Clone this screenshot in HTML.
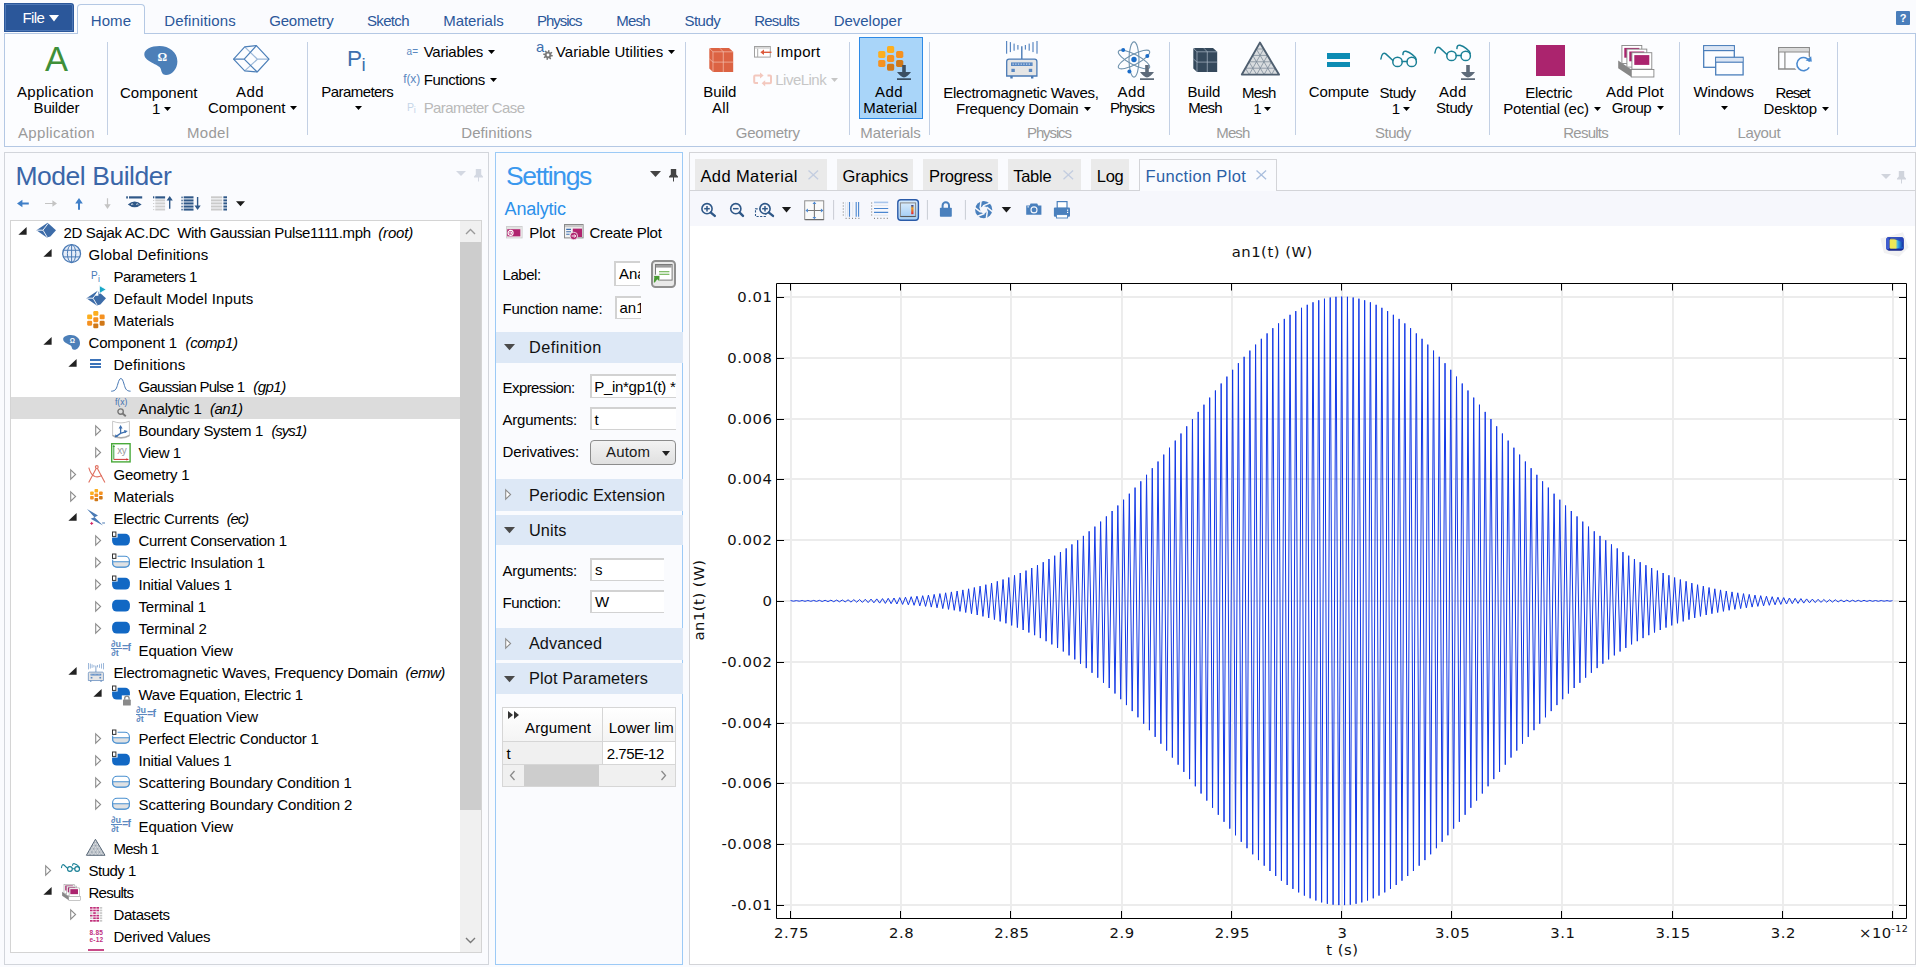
<!DOCTYPE html>
<html lang="en"><head><meta charset="utf-8"><title>COMSOL Multiphysics - Function Plot</title>
<style>
html,body{margin:0;padding:0;}
body{width:1916px;height:967px;overflow:hidden;background:#fafbfe;position:relative;font-family:"Liberation Sans",sans-serif;}
.a{position:absolute;box-sizing:border-box;}
.t{position:absolute;white-space:pre;line-height:1;color:#000;}
svg{overflow:visible;}
</style></head><body>
<div class="a" style="left:4px;top:3px;width:70px;height:29px;background:#2b579a;border-radius:0 3px 0 0;"></div>
<div class="a" style="left:5px;top:4px;width:68px;height:27px;border:1px solid #4d77b6;border-radius:0 2px 0 0;"></div>
<span class="t" style="top:10.00px;font-size:15px;color:#fff;left:22.50px;letter-spacing:-0.624px;">File</span>
<svg class="a" style="left:48.5px;top:14.7px;" width="10" height="6.4" viewBox="0 0 10 6.4"><path d="M0 0H10L5 6.4Z" fill="#fff"/></svg>
<div class="a" style="left:4px;top:33px;width:1912px;height:114px;background:#fcfdff;border:1px solid #b4c8e4;"></div>
<div class="a" style="left:77px;top:4px;width:68px;height:30px;background:#fcfdff;border:1px solid #b4c8e4;border-radius:4px 4px 0 0;border-bottom:none;"></div>
<span class="t" style="top:13.00px;font-size:15px;color:#2b579a;left:90.80px;letter-spacing:0.061px;">Home</span>
<span class="t" style="top:13.00px;font-size:15px;color:#2b579a;left:164.30px;letter-spacing:0.145px;">Definitions</span>
<span class="t" style="top:13.00px;font-size:15px;color:#2b579a;left:269.20px;letter-spacing:-0.194px;">Geometry</span>
<span class="t" style="top:13.00px;font-size:15px;color:#2b579a;left:367.00px;letter-spacing:-0.672px;">Sketch</span>
<span class="t" style="top:13.00px;font-size:15px;color:#2b579a;left:443.20px;letter-spacing:-0.045px;">Materials</span>
<span class="t" style="top:13.00px;font-size:15px;color:#2b579a;left:537.00px;letter-spacing:-1.031px;">Physics</span>
<span class="t" style="top:13.00px;font-size:15px;color:#2b579a;left:616.20px;letter-spacing:-0.729px;">Mesh</span>
<span class="t" style="top:13.00px;font-size:15px;color:#2b579a;left:684.40px;letter-spacing:-0.490px;">Study</span>
<span class="t" style="top:13.00px;font-size:15px;color:#2b579a;left:754.20px;letter-spacing:-0.755px;">Results</span>
<span class="t" style="top:13.00px;font-size:15px;color:#2b579a;left:833.70px;letter-spacing:-0.022px;">Developer</span>
<div class="a" style="left:1896px;top:11px;width:14px;height:14px;background:#4a7ebb;border-radius:1px;"></div>
<span class="t" style="top:13.00px;font-size:11px;color:#fff;font-weight:bold;left:1903.00px;transform:translateX(-50%);">?</span>
<div class="a" style="left:106.5px;top:42px;width:1px;height:93px;background:#c3d0e4;"></div>
<div class="a" style="left:306.5px;top:42px;width:1px;height:93px;background:#c3d0e4;"></div>
<div class="a" style="left:685.0px;top:42px;width:1px;height:93px;background:#c3d0e4;"></div>
<div class="a" style="left:848.5px;top:42px;width:1px;height:93px;background:#c3d0e4;"></div>
<div class="a" style="left:929.0px;top:42px;width:1px;height:93px;background:#c3d0e4;"></div>
<div class="a" style="left:1169.0px;top:42px;width:1px;height:93px;background:#c3d0e4;"></div>
<div class="a" style="left:1294.5px;top:42px;width:1px;height:93px;background:#c3d0e4;"></div>
<div class="a" style="left:1488.5px;top:42px;width:1px;height:93px;background:#c3d0e4;"></div>
<div class="a" style="left:1678.5px;top:42px;width:1px;height:93px;background:#c3d0e4;"></div>
<div class="a" style="left:1837.0px;top:42px;width:1px;height:93px;background:#c3d0e4;"></div>
<span class="t" style="top:125.00px;font-size:15px;color:#9a9a9a;left:18.00px;letter-spacing:0.331px;">Application</span>
<span class="t" style="top:125.00px;font-size:15px;color:#9a9a9a;left:187.00px;letter-spacing:0.285px;">Model</span>
<span class="t" style="top:125.00px;font-size:15px;color:#9a9a9a;left:461.30px;letter-spacing:0.065px;">Definitions</span>
<span class="t" style="top:125.00px;font-size:15px;color:#9a9a9a;left:735.80px;letter-spacing:-0.237px;">Geometry</span>
<span class="t" style="top:125.00px;font-size:15px;color:#9a9a9a;left:860.30px;letter-spacing:-0.045px;">Materials</span>
<span class="t" style="top:125.00px;font-size:15px;color:#9a9a9a;left:1027.00px;letter-spacing:-1.115px;">Physics</span>
<span class="t" style="top:125.00px;font-size:15px;color:#9a9a9a;left:1216.30px;letter-spacing:-0.896px;">Mesh</span>
<span class="t" style="top:125.00px;font-size:15px;color:#9a9a9a;left:1375.00px;letter-spacing:-0.515px;">Study</span>
<span class="t" style="top:125.00px;font-size:15px;color:#9a9a9a;left:1563.30px;letter-spacing:-0.772px;">Results</span>
<span class="t" style="top:125.00px;font-size:15px;color:#9a9a9a;left:1737.60px;letter-spacing:-0.389px;">Layout</span>
<div class="a" style="left:858.5px;top:37px;width:64.5px;height:81.5px;background:#a9d5f9;border:1px solid #2e8ae6;"></div>
<span class="t" style="top:84.00px;font-size:15px;left:17.00px;letter-spacing:0.311px;">Application</span>
<span class="t" style="top:100.00px;font-size:15px;left:33.50px;letter-spacing:-0.117px;">Builder</span>
<span class="t" style="top:85.00px;font-size:15px;left:120.00px;letter-spacing:-0.008px;">Component</span>
<span class="t" style="top:101.00px;font-size:15px;left:152.00px;letter-spacing:-1.344px;">1</span>
<span class="t" style="top:84.00px;font-size:15px;left:236.00px;letter-spacing:0.398px;">Add</span>
<span class="t" style="top:100.00px;font-size:15px;left:208.00px;letter-spacing:-0.008px;">Component</span>
<span class="t" style="top:84.00px;font-size:15px;left:321.30px;letter-spacing:-0.570px;">Parameters</span>
<span class="t" style="top:44.00px;font-size:15px;left:423.70px;letter-spacing:-0.228px;">Variables</span>
<span class="t" style="top:72.00px;font-size:15px;left:423.70px;letter-spacing:-0.431px;">Functions</span>
<span class="t" style="top:44.00px;font-size:15px;left:555.80px;letter-spacing:0.062px;">Variable Utilities</span>
<span class="t" style="top:84.00px;font-size:15px;left:703.30px;letter-spacing:-0.090px;">Build</span>
<span class="t" style="top:100.00px;font-size:15px;left:712.00px;letter-spacing:0.164px;">All</span>
<span class="t" style="top:44.00px;font-size:15px;left:776.30px;letter-spacing:0.297px;">Import</span>
<span class="t" style="top:84.00px;font-size:15px;left:875.00px;letter-spacing:0.398px;">Add</span>
<span class="t" style="top:100.00px;font-size:15px;left:863.30px;letter-spacing:0.049px;">Material</span>
<span class="t" style="top:85.00px;font-size:15px;left:943.30px;letter-spacing:-0.261px;">Electromagnetic Waves,</span>
<span class="t" style="top:101.00px;font-size:15px;left:956.00px;letter-spacing:-0.269px;">Frequency Domain</span>
<span class="t" style="top:84.00px;font-size:15px;left:1117.50px;letter-spacing:0.398px;">Add</span>
<span class="t" style="top:100.00px;font-size:15px;left:1110.00px;letter-spacing:-1.115px;">Physics</span>
<span class="t" style="top:84.00px;font-size:15px;left:1187.50px;letter-spacing:-0.140px;">Build</span>
<span class="t" style="top:100.00px;font-size:15px;left:1188.30px;letter-spacing:-0.829px;">Mesh</span>
<span class="t" style="top:85.00px;font-size:15px;left:1242.00px;letter-spacing:-0.796px;">Mesh</span>
<span class="t" style="top:101.00px;font-size:15px;left:1253.30px;letter-spacing:-1.344px;">1</span>
<span class="t" style="top:84.00px;font-size:15px;left:1308.70px;letter-spacing:-0.096px;">Compute</span>
<span class="t" style="top:85.00px;font-size:15px;left:1379.50px;letter-spacing:-0.465px;">Study</span>
<span class="t" style="top:101.00px;font-size:15px;left:1391.70px;letter-spacing:-1.344px;">1</span>
<span class="t" style="top:84.00px;font-size:15px;left:1439.00px;letter-spacing:0.298px;">Add</span>
<span class="t" style="top:100.00px;font-size:15px;left:1436.00px;letter-spacing:-0.390px;">Study</span>
<span class="t" style="top:85.00px;font-size:15px;left:1525.30px;letter-spacing:-0.284px;">Electric</span>
<span class="t" style="top:101.00px;font-size:15px;left:1503.30px;letter-spacing:-0.206px;">Potential (ec)</span>
<span class="t" style="top:84.00px;font-size:15px;left:1606.00px;letter-spacing:0.140px;">Add Plot</span>
<span class="t" style="top:100.00px;font-size:15px;left:1611.70px;letter-spacing:-0.426px;">Group</span>
<span class="t" style="top:84.00px;font-size:15px;left:1693.40px;letter-spacing:-0.060px;">Windows</span>
<span class="t" style="top:85.00px;font-size:15px;left:1775.60px;letter-spacing:-0.997px;">Reset</span>
<span class="t" style="top:101.00px;font-size:15px;left:1763.60px;letter-spacing:-0.272px;">Desktop</span>
<span class="t" style="top:100.00px;font-size:15px;color:#b9b9b9;left:423.70px;letter-spacing:-0.609px;">Parameter Case</span>
<span class="t" style="top:72.00px;font-size:15px;color:#c6c6c6;left:775.30px;letter-spacing:-0.521px;">LiveLink</span>
<svg class="a" style="left:163.5px;top:107.0px;" width="7" height="4" viewBox="0 0 7 4"><path d="M0 0H7L3.5 4Z" fill="#000"/></svg>
<svg class="a" style="left:289.5px;top:106.0px;" width="7" height="4" viewBox="0 0 7 4"><path d="M0 0H7L3.5 4Z" fill="#000"/></svg>
<svg class="a" style="left:354.8px;top:105.9px;" width="7" height="4" viewBox="0 0 7 4"><path d="M0 0H7L3.5 4Z" fill="#000"/></svg>
<svg class="a" style="left:487.5px;top:50.0px;" width="7" height="4" viewBox="0 0 7 4"><path d="M0 0H7L3.5 4Z" fill="#000"/></svg>
<svg class="a" style="left:489.5px;top:78.0px;" width="7" height="4" viewBox="0 0 7 4"><path d="M0 0H7L3.5 4Z" fill="#000"/></svg>
<svg class="a" style="left:668.0px;top:50.0px;" width="7" height="4" viewBox="0 0 7 4"><path d="M0 0H7L3.5 4Z" fill="#000"/></svg>
<svg class="a" style="left:830.8px;top:78.0px;" width="7" height="4" viewBox="0 0 7 4"><path d="M0 0H7L3.5 4Z" fill="#c6c6c6"/></svg>
<svg class="a" style="left:1083.7px;top:107.0px;" width="7" height="4" viewBox="0 0 7 4"><path d="M0 0H7L3.5 4Z" fill="#000"/></svg>
<svg class="a" style="left:1264.0px;top:107.0px;" width="7" height="4" viewBox="0 0 7 4"><path d="M0 0H7L3.5 4Z" fill="#000"/></svg>
<svg class="a" style="left:1402.5px;top:107.0px;" width="7" height="4" viewBox="0 0 7 4"><path d="M0 0H7L3.5 4Z" fill="#000"/></svg>
<svg class="a" style="left:1593.7px;top:107.0px;" width="7" height="4" viewBox="0 0 7 4"><path d="M0 0H7L3.5 4Z" fill="#000"/></svg>
<svg class="a" style="left:1656.5px;top:106.0px;" width="7" height="4" viewBox="0 0 7 4"><path d="M0 0H7L3.5 4Z" fill="#000"/></svg>
<svg class="a" style="left:1721.0px;top:106.0px;" width="7" height="4" viewBox="0 0 7 4"><path d="M0 0H7L3.5 4Z" fill="#000"/></svg>
<svg class="a" style="left:1822.0px;top:107.0px;" width="7" height="4" viewBox="0 0 7 4"><path d="M0 0H7L3.5 4Z" fill="#000"/></svg>
<span class="t" style="top:42.00px;font-size:34.5px;color:#3f8f38;left:56.60px;transform:translateX(-50%);">A</span>
<svg class="a" style="left:143.8px;top:45.6px" width="33.4" height="29.0" viewBox="0 0 33.4 29"><path d="M0.3 8.2C0.3 3.5 7 0 15.5 0C25 0 33.4 6 33.4 15.5C33.4 23 28 29 22 29C18.5 29 17.5 26 17 23.5C16.3 20.5 13 19.5 9.5 17.5C4.5 14.8 0.3 12.5 0.3 8.2Z" fill="#4c7fb8"/></svg>
<span class="t" style="top:51.00px;font-size:12px;color:#fff;font-weight:bold;font-family:'Liberation Serif',serif;left:162.30px;transform:translateX(-50%);">Ω</span>
<svg class="a" style="left:233px;top:44.6px;" width="36.6" height="27.6" viewBox="0 0 36.6 27.6"><g fill="none" stroke="#4c7fb8" stroke-width="1.2" stroke-linejoin="round"><path d="M0.6 14.2L11.7 1.9L23.4 0.6L36 14.2L24.2 27L11.7 25.9Z"/><path d="M0.6 14.2H11.2L23.4 0.6M11.2 14.2L24.2 27"/><path d="M36 14.2H24.4L11.7 1.9M24.4 14.2L11.7 25.9" stroke-opacity="0.55"/></g></svg>
<span class="t" style="top:48.00px;font-size:22.5px;color:#3d6fae;left:347.00px;">P</span>
<span class="t" style="top:55.00px;font-size:19px;color:#3d6fae;left:361.40px;">i</span>
<span class="t" style="top:47.00px;font-size:10px;color:#5b88c0;left:406.60px;letter-spacing:-0.006px;">a=</span>
<span class="t" style="top:73.00px;font-size:12px;color:#5b88c0;left:403.20px;letter-spacing:-0.109px;">f(x)</span>
<span class="t" style="top:102.00px;font-size:10.5px;color:#c5d5e8;left:407.00px;">P</span>
<span class="t" style="top:106.00px;font-size:9px;color:#c5d5e8;left:413.80px;">i</span>
<span class="t" style="top:39.00px;font-size:15px;color:#3d6fae;left:536.00px;">a</span>
<svg class="a" style="left:542.9px;top:50.4px;" width="10" height="10" viewBox="0 0 10 10"><path d="M9.89 5.32L9.64 6.57L7.96 6.46L7.48 7.17L8.23 8.69L7.17 9.39L6.06 8.13L5.22 8.29L4.68 9.89L3.43 9.64L3.54 7.96L2.83 7.48L1.31 8.23L0.61 7.17L1.87 6.06L1.71 5.22L0.11 4.68L0.36 3.43L2.04 3.54L2.52 2.83L1.77 1.31L2.83 0.61L3.94 1.87L4.78 1.71L5.32 0.11L6.57 0.36L6.46 2.04L7.17 2.52L8.69 1.77L9.39 2.83L8.13 3.94L8.29 4.78Z" fill="#777"/><circle cx="5" cy="5" r="1.4" fill="#fff"/></svg>
<svg class="a" style="left:708.8px;top:48.1px;" width="24.2" height="24" viewBox="0 0 24.2 24"><path d="M0.3 0.6L2.3 0H20L24.2 3.8V24H4L0.3 20.4Z" fill="#dc6343"/><path d="M4 3.8H24.2M4 3.8V24M4 3.8L0.6 0.5M14.3 3.8V24M4 14.1H24.2M14.3 3.8L11 0.3M0.3 10.8L4 14.1" stroke="#f4c0b0" stroke-width="0.7" fill="none"/></svg>
<svg class="a" style="left:754.4px;top:45.6px;" width="18" height="11.6" viewBox="0 0 18 11.6"><rect x="0.5" y="0.5" width="15.8" height="10.6" fill="#fff" stroke="#a0a0a0"/><rect x="1" y="1" width="14.8" height="1.8" fill="#d8d8d8"/><path d="M3.7 2.8V11" stroke="#a0a0a0" stroke-width="0.9"/><path d="M17.5 6.3H9" stroke="#dc5a3c" stroke-width="1.4"/><path d="M6.3 6.3L10 3.6V9Z" fill="#dc5a3c"/></svg>
<svg class="a" style="left:753px;top:73px;" width="19.5" height="13.5" viewBox="0 0 19.5 13.5"><g fill="none" stroke="#f3c8be" stroke-width="2"><path d="M8 2.5H2.2Q1.2 2.5 1.2 3.5V9Q1.2 10 2.2 10H5"/><path d="M11 10.2H17Q18 10.2 18 9.2V3.6Q18 2.6 17 2.6H14.5"/></g><path d="M7 -0.6L10.6 2.5L7 5.6Z" fill="#f3c8be"/><path d="M12.2 7.2L8.6 10.2L12.2 13.4Z" fill="#f3c8be"/></svg>
<svg class="a" style="left:878px;top:46.1px" width="25.5" height="24.8" viewBox="0 0 25.5 24.8"><rect x="9" y="0" width="7.2" height="6.9" rx="1.6" fill="#fcae1e"/><rect x="0.2" y="5" width="7.2" height="6.9" rx="1.6" fill="#fcae1e"/><rect x="18.1" y="5" width="7.2" height="6.9" rx="1.6" fill="#f59120"/><rect x="9" y="9" width="7.2" height="6.9" rx="1.6" fill="#f59120"/><rect x="0.2" y="14" width="7.2" height="6.9" rx="1.6" fill="#f59120"/><rect x="18.1" y="14" width="7.2" height="6.9" rx="1.6" fill="#d07818"/><rect x="9" y="17.8" width="7.2" height="6.9" rx="1.6" fill="#d07818"/></svg>
<svg class="a" style="left:895.6px;top:64px;" width="17" height="17" viewBox="0 0 17 17"><path d="M0 0H17V17H0Z" fill="none"/></svg>
<svg class="a" style="left:897px;top:65.1px;" width="14" height="15" viewBox="0 0 14 15"><path d="M5.2 0H8.8V7H14C12 10 9 12 7 12.6C5 12 2 10 0 7H5.2ZM0 13.3H14V15H0Z" fill="#3b4f62"/></svg>
<svg class="a" style="left:1006.2px;top:40.9px" width="32.0" height="37.5" viewBox="0 0 32 37.5"><rect x="0.0" y="0" width="1.2" height="12.7" fill="#5a88c2"/><rect x="3.8000000000000003" y="1.1" width="1.2" height="10" fill="#5a88c2"/><rect x="7.5" y="2.6" width="1.2" height="7.1" fill="#5a88c2"/><rect x="11.3" y="4" width="1.2" height="4.6" fill="#5a88c2"/><rect x="18.799999999999997" y="4" width="1.2" height="4.6" fill="#5a88c2"/><rect x="22.599999999999998" y="2.6" width="1.2" height="7.1" fill="#5a88c2"/><rect x="26.4" y="1.1" width="1.2" height="10" fill="#5a88c2"/><rect x="30.4" y="0" width="1.2" height="12.7" fill="#5a88c2"/><path d="M15.8 5.3V18" stroke="#4a7ab5" stroke-width="1.4"/><path d="M5.5 35V37.4M26.2 35V37.4" stroke="#4a7ab5" stroke-width="2.4"/><path d="M0.7 35V20.5Q0.7 18.2 3 18.2H28.6Q30.9 18.2 30.9 20.5V35Z" fill="#e6e6e6" stroke="#4a7ab5" stroke-width="1.3"/><rect x="5" y="21.4" width="21.6" height="3.6" fill="#5a88c2"/><path d="M6.5 23.2H25.5" stroke="#c8d8ee" stroke-width="1.2" stroke-dasharray="1.3 1.4"/><rect x="5.4" y="27.8" width="3.4" height="3.2" fill="#5a88c2"/><rect x="22.8" y="27.8" width="3.4" height="3.2" fill="#5a88c2"/></svg>
<svg class="a" style="left:1115.5px;top:40.6px;" width="36" height="37" viewBox="0 0 36 37"><g fill="none" stroke="#6f92ad" stroke-width="1.1"><ellipse cx="18" cy="18.5" rx="5" ry="17.6"/><ellipse cx="18" cy="18.5" rx="5" ry="17.6" transform="rotate(62 18 18.5)"/><ellipse cx="18" cy="18.5" rx="5" ry="17.6" transform="rotate(-62 18 18.5)"/></g><g fill="#1a6cc8"><circle cx="18" cy="18.5" r="2.7"/><circle cx="7.2" cy="8.9" r="2"/><circle cx="31.3" cy="14.9" r="2"/><circle cx="13.4" cy="30.4" r="2"/></g></svg>
<svg class="a" style="left:1140px;top:65.1px;" width="14" height="15" viewBox="0 0 14 15"><path d="M5.2 0H8.8V7H14C12 10 9 12 7 12.6C5 12 2 10 0 7H5.2ZM0 13.3H14V15H0Z" fill="#5e6b7a"/></svg>
<svg class="a" style="left:1193px;top:48.1px;" width="24.2" height="24" viewBox="0 0 24.2 24"><path d="M0.3 0.6L2.3 0H20L24.2 3.8V24H4L0.3 20.4Z" fill="#35495c"/><path d="M4 3.8H24.2M4 3.8V24M4 3.8L0.6 0.5M14.3 3.8V24M4 14.1H24.2M14.3 3.8L11 0.3M0.3 10.8L4 14.1" stroke="#aab8c6" stroke-width="0.7" fill="none"/></svg>
<svg class="a" style="left:1241.4px;top:42px" width="38.8" height="33.4" viewBox="0 0 38.8 33.4"><path d="M18.9 0.6L38 32.6H0.8Z" fill="#d9dcdf"/><path d="M15.3 7.0H22.7M8.2 32.6L22.7 7.0M8.2 32.6L4.4 26.2M11.7 13.4H26.5M15.7 32.6L26.5 13.4M15.7 32.6L8.0 19.8M8.0 19.8H30.4M23.1 32.6L30.4 19.8M23.1 32.6L11.7 13.4M4.4 26.2H34.2M30.6 32.6L34.2 26.2M30.6 32.6L15.3 7.0" stroke="#7d8b99" stroke-width="0.8" fill="none"/><path d="M18.9 0.6L38 32.6H0.8Z" fill="none" stroke="#4f5f70" stroke-width="1.9" stroke-linejoin="round"/></svg>
<div class="a" style="left:1327.2px;top:53.3px;width:22.8px;height:5.3px;background:#0d8cb4;"></div>
<div class="a" style="left:1327.2px;top:61.9px;width:22.8px;height:5.2px;background:#0d8cb4;"></div>
<svg class="a" style="left:1379.6px;top:49.8px" width="37.5" height="17.5" viewBox="0 0 37.5 17.5"><g fill="none" stroke="#1a8096" stroke-width="1.5" stroke-linecap="round"><circle cx="17.5" cy="11.9" r="4.7"/><circle cx="31.7" cy="11.9" r="4.7"/><path d="M22.2 11.4H27"/><path d="M12.9 10.5L5.8 3.9C4 2.3 1.6 3.5 0.9 9"/><path d="M36.2 9.5C35.5 6 30 2.5 26 1.3C24 0.8 23 2 22.9 4.6"/></g></svg>
<svg class="a" style="left:1434.4px;top:43.5px" width="37.5" height="17.5" viewBox="0 0 37.5 17.5"><g fill="none" stroke="#1a8096" stroke-width="1.5" stroke-linecap="round"><circle cx="17.5" cy="11.9" r="4.7"/><circle cx="31.7" cy="11.9" r="4.7"/><path d="M22.2 11.4H27"/><path d="M12.9 10.5L5.8 3.9C4 2.3 1.6 3.5 0.9 9"/><path d="M36.2 9.5C35.5 6 30 2.5 26 1.3C24 0.8 23 2 22.9 4.6"/></g></svg>
<svg class="a" style="left:1461px;top:64.9px;" width="14" height="15" viewBox="0 0 14 15"><path d="M5.2 0H8.8V7H14C12 10 9 12 7 12.6C5 12 2 10 0 7H5.2ZM0 13.3H14V15H0Z" fill="#5e6b7a"/></svg>
<div class="a" style="left:1535.8px;top:45px;width:29.7px;height:30.5px;background:#ab246e;"></div>
<svg class="a" style="left:1618px;top:44.6px" width="36.4" height="32.5" viewBox="0 0 36.4 32.5"><path d="M0.2 15.4L13.3 24.5V32H13.3L0.2 23.2Z" fill="#878787"/><rect x="3.9" y="0.5" width="19.9" height="18" fill="#fff" stroke="#878787" stroke-width="0.9"/><rect x="6.3" y="2.9" width="15" height="9.8" fill="#ab246e"/><rect x="8.9" y="4.1" width="19.9" height="18" fill="#fff" stroke="#878787" stroke-width="0.9"/><rect x="11.3" y="6.5" width="15" height="9.8" fill="#ab246e"/><rect x="13.9" y="7.7" width="19.9" height="16.5" fill="#fff" stroke="#878787" stroke-width="0.9"/><rect x="16.3" y="10.1" width="15" height="9.8" fill="#ab246e"/><rect x="13.3" y="24.5" width="22.6" height="7.5" fill="#fff" stroke="#878787" stroke-width="0.9"/></svg>
<svg class="a" style="left:1702.6px;top:44.6px;" width="41" height="31" viewBox="0 0 41 31"><rect x="0.7" y="0.7" width="30.6" height="21.6" fill="#fcfdff" stroke="#4a7ebb" stroke-width="1.3"/><rect x="1.3" y="1.3" width="29.4" height="4" fill="#dce6f4"/><path d="M0.7 5.6H31.3" stroke="#4a7ebb" stroke-width="1.2"/><rect x="12.7" y="12.3" width="27.4" height="17.6" fill="#fcfdff" stroke="#4a7ebb" stroke-width="1.3"/><rect x="13.3" y="12.9" width="26.2" height="4" fill="#dce6f4"/><path d="M12.7 17.2H40" stroke="#4a7ebb" stroke-width="1.2"/></svg>
<svg class="a" style="left:1778px;top:47px;" width="35" height="27" viewBox="0 0 35 27"><path d="M0.7 0.7H31.3V22H0.7Z" fill="#fcfdff" stroke="#8a8a8a" stroke-width="1.3"/><rect x="1.3" y="1.3" width="29.4" height="3.6" fill="#d8d8d8"/><path d="M0.7 5H31.3M6.9 5V22" stroke="#8a8a8a" stroke-width="1.2"/><circle cx="25.3" cy="17" r="9.2" fill="#fcfdff"/><path d="M31.6 14.6A6.6 6.6 0 1 0 31.2 20.4" fill="none" stroke="#4a8ad0" stroke-width="1.6"/><path d="M27.6 13.4L33.8 14.8L33.2 9.2Z" fill="#4a8ad0"/></svg>
<div class="a" style="left:4px;top:152px;width:485px;height:813px;border:1px solid #d2d5db;"></div>
<span class="t" style="top:163.00px;font-size:26.5px;color:#3a66a8;left:15.40px;letter-spacing:-0.461px;">Model Builder</span>
<svg class="a" style="left:14px;top:194px" width="234" height="20" viewBox="14 194 234 20"><path d="M17 203.5L22.4 199.8V202.5H28.8V204.5H22.4V207.2Z" fill="#3f7fc8"/><path d="M57 203.5L52.4 200.3V202.9H45V204.1H52.4V206.7Z" fill="#c4c4c4"/><path d="M79 198L82.8 203.6H80V209.8H78V203.6H75.2Z" fill="#3f7fc8"/><path d="M107.5 209L104.3 204.2H106.9V198.2H108.1V204.2H110.7Z" fill="#c4c4c4"/><rect x="126.2" y="196.3" width="1.7" height="2.2" fill="#2f5888"/><rect x="129" y="196.3" width="13.2" height="2.2" fill="#2f5888"/><path d="M127.8 204.4Q134.6 198.6 141.6 204.4Q134.6 210 127.8 204.4Z" fill="#2f5888"/><path d="M131 204.6Q132 203.2 133.2 204.4M136.2 204.4Q137.4 203.2 138.4 204.6" stroke="#fff" stroke-width="0.9" fill="none"/><rect x="153" y="196.3" width="1.3" height="2" fill="#2f5888"/><rect x="155.3" y="196.3" width="9.8" height="2.2" fill="#2f5888"/><rect x="153.2" y="200.0" width="1" height="1" fill="#c4c4c4"/><rect x="155.3" y="199.4" width="9.8" height="2" fill="#cfcfcf"/><rect x="153.2" y="203.0" width="1" height="1" fill="#c4c4c4"/><rect x="155.3" y="202.4" width="9.8" height="2" fill="#cfcfcf"/><rect x="153.2" y="206.1" width="1" height="1" fill="#c4c4c4"/><rect x="155.3" y="205.5" width="9.8" height="2" fill="#cfcfcf"/><rect x="153.2" y="209.1" width="1" height="1" fill="#c4c4c4"/><rect x="155.3" y="208.5" width="9.8" height="2" fill="#cfcfcf"/><path d="M169.7 196L172.8 200.6H170.4V208.8H169V200.6H166.6Z" fill="#2f5888"/><rect x="181.4" y="196.6" width="1.3" height="1.6" fill="#2f5888"/><rect x="183.7" y="196.3" width="9.8" height="2.1" fill="#2f5888"/><rect x="181.4" y="199.7" width="1.3" height="1.6" fill="#2f5888"/><rect x="183.7" y="199.4" width="9.8" height="2.1" fill="#2f5888"/><rect x="181.4" y="202.7" width="1.3" height="1.6" fill="#2f5888"/><rect x="183.7" y="202.4" width="9.8" height="2.1" fill="#2f5888"/><rect x="181.4" y="205.8" width="1.3" height="1.6" fill="#2f5888"/><rect x="183.7" y="205.5" width="9.8" height="2.1" fill="#2f5888"/><rect x="181.4" y="208.8" width="1.3" height="1.6" fill="#2f5888"/><rect x="183.7" y="208.5" width="9.8" height="2.1" fill="#2f5888"/><path d="M197.6 210L194.5 205.4H196.9V197H198.3V205.4H200.7Z" fill="#2f5888"/><rect x="211" y="196.3" width="11.2" height="2" fill="#cacaca"/><rect x="223.4" y="196.3" width="3.6" height="2" fill="#2f5888"/><rect x="211" y="199.4" width="11.2" height="2" fill="#cacaca"/><rect x="223.4" y="199.4" width="3.6" height="2" fill="#2f5888"/><rect x="211" y="202.4" width="11.2" height="2" fill="#cacaca"/><rect x="223.4" y="202.4" width="3.6" height="2" fill="#2f5888"/><rect x="211" y="205.5" width="11.2" height="2" fill="#cacaca"/><rect x="223.4" y="205.5" width="3.6" height="2" fill="#2f5888"/><rect x="211" y="208.5" width="11.2" height="2" fill="#cacaca"/><rect x="223.4" y="208.5" width="3.6" height="2" fill="#2f5888"/><path d="M236 201.3H245L240.5 206.3Z" fill="#1a1a1a"/></svg>
<svg class="a" style="left:456px;top:170.8px;" width="10" height="5" viewBox="0 0 10 5"><path d="M0 0H10L5 5Z" fill="#d3d8e2"/></svg>
<svg class="a" style="left:473.8px;top:168.5px;" width="9" height="12.5" viewBox="0 0 9 12.5"><path d="M1.8 0H7.2V5.6L9 7.6V8.6H5V12.5H4V8.6H0V7.6L1.8 5.6Z" fill="#d3d8e2"/></svg>
<div class="a" style="left:10px;top:220px;width:472px;height:733px;background:#fff;border:1px solid #d4d4d4;"></div>
<div class="a" style="left:460px;top:221px;width:21px;height:731px;background:#f0f0f0;"></div>
<div class="a" style="left:460px;top:242px;width:21px;height:568px;background:#cdcdcd;"></div>
<svg class="a" style="left:465px;top:228px;" width="11" height="7" viewBox="0 0 11 7"><path d="M1 6L5.5 1.5L10 6" fill="none" stroke="#9a9a9a" stroke-width="1.4"/></svg>
<svg class="a" style="left:465px;top:937px;" width="11" height="7" viewBox="0 0 11 7"><path d="M1 1L5.5 5.5L10 1" fill="none" stroke="#7a7a7a" stroke-width="1.4"/></svg>
<div class="a" style="left:11px;top:397px;width:449px;height:22px;background:#dcdcdc;"></div>
<svg class="a" style="left:17.9px;top:227.1px;" width="9" height="8" viewBox="0 0 9 8"><path d="M8.6 0V7.8H0.4Z" fill="#222"/></svg>
<svg class="a" style="left:36.2px;top:222.4px;" width="20.4" height="17" viewBox="0 0 20.4 17"><path d="M0.4 8.2L11.6 0.7L20 8.2L14.4 14.6L10.8 15.5Z" fill="#3d6ca8"/><path d="M12.2 1.4L7 8.2L11.1 15M7 8.2H0.9" stroke="#fff" stroke-width="0.9" fill="none"/></svg>
<span class="t" style="top:225.00px;font-size:15px;left:63.50px;letter-spacing:-0.338px;">2D Sajak AC.DC  With Gaussian Pulse1111.mph</span>
<span class="t" style="top:225.00px;font-size:15px;font-style:italic;left:378.30px;letter-spacing:-0.189px;">(root)</span>
<svg class="a" style="left:42.9px;top:249.1px;" width="9" height="8" viewBox="0 0 9 8"><path d="M8.6 0V7.8H0.4Z" fill="#222"/></svg>
<svg class="a" style="left:62.199999999999996px;top:244.2px;" width="19.2" height="19.2" viewBox="0 0 19.2 19.2"><circle cx="9.6" cy="9.6" r="8.9" fill="#e6edf8" stroke="#4a7ab5" stroke-width="1.3"/><g fill="none" stroke="#4a7ab5" stroke-width="1"><ellipse cx="9.6" cy="9.6" rx="4.2" ry="8.9"/><path d="M9.6 0.7V18.5M1 6.3H18.2M1 12.9H18.2"/></g></svg>
<span class="t" style="top:247.00px;font-size:15px;left:88.50px;letter-spacing:0.132px;">Global Definitions</span>
<span class="t" style="top:271.00px;font-size:10px;color:#4a7ab8;left:91.10px;">P</span>
<span class="t" style="top:275.00px;font-size:8.5px;color:#4a7ab8;left:98.10px;">i</span>
<span class="t" style="top:269.00px;font-size:15px;left:113.50px;letter-spacing:-0.568px;">Parameters 1</span>
<svg class="a" style="left:86.2px;top:289.4px;" width="20.4" height="17" viewBox="0 0 20.4 17"><path d="M0.4 9.2L11.6 1.7L20 9.2L14.4 15.6L10.8 16.5Z" fill="#3d6ca8"/><path d="M12.2 2.4L7 9.2L11.1 16M7 9.2H0.9" stroke="#fff" stroke-width="0.9" fill="none"/><path d="M12.4 0.6V5.6L12.4 6.8L9 6.8Z" fill="#fff"/><path d="M13.4 -3.4L20.2 0.4L13.4 4.6Z" fill="#1aa8c8" stroke="#fff" stroke-width="0.8"/></svg>
<span class="t" style="top:291.00px;font-size:15px;left:113.50px;letter-spacing:0.112px;">Default Model Inputs</span>
<svg class="a" style="left:87.10000000000001px;top:311.3px" width="17.8" height="17.4" viewBox="0 0 25.5 24.8"><rect x="9" y="0" width="7.2" height="6.9" rx="1.6" fill="#fcae1e"/><rect x="0.2" y="5" width="7.2" height="6.9" rx="1.6" fill="#fcae1e"/><rect x="18.1" y="5" width="7.2" height="6.9" rx="1.6" fill="#f59120"/><rect x="9" y="9" width="7.2" height="6.9" rx="1.6" fill="#f59120"/><rect x="0.2" y="14" width="7.2" height="6.9" rx="1.6" fill="#f59120"/><rect x="18.1" y="14" width="7.2" height="6.9" rx="1.6" fill="#d07818"/><rect x="9" y="17.8" width="7.2" height="6.9" rx="1.6" fill="#d07818"/></svg>
<span class="t" style="top:313.00px;font-size:15px;left:113.50px;letter-spacing:-0.032px;">Materials</span>
<svg class="a" style="left:42.9px;top:337.1px;" width="9" height="8" viewBox="0 0 9 8"><path d="M8.6 0V7.8H0.4Z" fill="#222"/></svg>
<svg class="a" style="left:62.9px;top:334.8px" width="17.0" height="14.8" viewBox="0 0 33.4 29"><path d="M0.3 8.2C0.3 3.5 7 0 15.5 0C25 0 33.4 6 33.4 15.5C33.4 23 28 29 22 29C18.5 29 17.5 26 17 23.5C16.3 20.5 13 19.5 9.5 17.5C4.5 14.8 0.3 12.5 0.3 8.2Z" fill="#4c7fb8"/></svg>
<span class="t" style="top:338.00px;font-size:6.5px;color:#fff;font-weight:bold;left:72.40px;transform:translateX(-50%);">Ω</span>
<span class="t" style="top:335.00px;font-size:15px;left:88.50px;letter-spacing:-0.156px;">Component 1</span>
<span class="t" style="top:335.00px;font-size:15px;font-style:italic;left:185.60px;letter-spacing:-0.453px;">(comp1)</span>
<svg class="a" style="left:67.9px;top:359.1px;" width="9" height="8" viewBox="0 0 9 8"><path d="M8.6 0V7.8H0.4Z" fill="#222"/></svg>
<div class="a" style="left:89.5px;top:358.8px;width:11.5px;height:2.1px;background:#3b73b9;"></div>
<div class="a" style="left:89.5px;top:362.55px;width:11.5px;height:2.1px;background:#3b73b9;"></div>
<div class="a" style="left:89.5px;top:366.3px;width:11.5px;height:2.1px;background:#3b73b9;"></div>
<span class="t" style="top:357.00px;font-size:15px;left:113.50px;letter-spacing:0.175px;">Definitions</span>
<svg class="a" style="left:111.3px;top:378px;" width="20" height="14" viewBox="0 0 20 14"><path d="M0.2 13.2C5 13.2 5.6 10 6.8 6C7.8 2.6 8.6 0.5 9.9 0.5C11.2 0.5 12 2.6 13 6C14.2 10 14.8 13.2 19.6 13.2" fill="none" stroke="#4a7ab5" stroke-width="1"/></svg>
<span class="t" style="top:379.00px;font-size:15px;left:138.50px;letter-spacing:-0.732px;">Gaussian Pulse 1</span>
<span class="t" style="top:379.00px;font-size:15px;font-style:italic;left:253.20px;letter-spacing:-0.508px;">(gp1)</span>
<span class="t" style="top:398.00px;font-size:8.5px;color:#3d6fae;left:114.90px;letter-spacing:0.073px;">f(x)</span>
<svg class="a" style="left:116.6px;top:408.4px;" width="10" height="10" viewBox="0 0 10 10"><circle cx="3.6" cy="3.6" r="2.7" fill="none" stroke="#777" stroke-width="1.4"/><path d="M5.6 5.6L8.8 8.3" stroke="#777" stroke-width="1.9"/></svg>
<span class="t" style="top:401.00px;font-size:15px;left:138.50px;letter-spacing:-0.183px;">Analytic 1</span>
<span class="t" style="top:401.00px;font-size:15px;font-style:italic;left:210.00px;letter-spacing:-0.533px;">(an1)</span>
<svg class="a" style="left:94.5px;top:424.5px;" width="7" height="11" viewBox="0 0 7 11"><path d="M0.7 0.8L5.6 5.5L0.7 10.2Z" fill="#fff" stroke="#8c8c8c" stroke-width="1.1"/></svg>
<svg class="a" style="left:112.0px;top:420.2px;" width="18" height="20" viewBox="0 0 18 20"><path d="M0.6 1.2Q9 4.6 17.4 1.2V16Q9 20.6 0.6 16Z" fill="#fff" stroke="#c8c8c8" stroke-width="1"/><path d="M0.6 15.4Q9 20 17.4 15.4" fill="none" stroke="#aaa" stroke-width="1.2"/><g stroke="#3d6fae" stroke-width="1.3" fill="none"><path d="M8.6 13.4V7.6M8.6 13.4L14 11.6M8.6 13.4L4.2 16.4"/></g><path d="M8.6 5L10.6 8.4H6.6ZM15.8 11L12.8 13.2L12 10ZM2.6 17.4L3.6 14.2L6 16.8Z" fill="#3d6fae"/></svg>
<span class="t" style="top:423.00px;font-size:15px;left:138.50px;letter-spacing:-0.382px;">Boundary System 1</span>
<span class="t" style="top:423.00px;font-size:15px;font-style:italic;left:271.40px;letter-spacing:-1.049px;">(sys1)</span>
<svg class="a" style="left:94.5px;top:446.5px;" width="7" height="11" viewBox="0 0 7 11"><path d="M0.7 0.8L5.6 5.5L0.7 10.2Z" fill="#fff" stroke="#8c8c8c" stroke-width="1.1"/></svg>
<svg class="a" style="left:111.1px;top:443.1px;" width="19.8" height="19.6" viewBox="0 0 19.8 19.6"><rect x="0.7" y="0.7" width="18.4" height="18.2" fill="#fff" stroke="#4aaa3a" stroke-width="1.4"/><path d="M2.8 16.4V3.4" stroke="#3aa03a" stroke-width="1"/><path d="M2.8 1.6L4 4H1.6Z" fill="#3aa03a"/><path d="M2.8 16.4H16" stroke="#d03030" stroke-width="1"/><path d="M18 16.4L15.4 17.6V15.2Z" fill="#d03030"/></svg>
<span class="t" style="top:446.00px;font-size:10px;color:#9a9a9a;left:117.20px;letter-spacing:-0.500px;">xy</span>
<span class="t" style="top:445.00px;font-size:15px;left:138.50px;letter-spacing:-0.413px;">View 1</span>
<svg class="a" style="left:69.5px;top:468.5px;" width="7" height="11" viewBox="0 0 7 11"><path d="M0.7 0.8L5.6 5.5L0.7 10.2Z" fill="#fff" stroke="#8c8c8c" stroke-width="1.1"/></svg>
<svg class="a" style="left:87.60000000000001px;top:465.3px;" width="17.6" height="18" viewBox="0 0 17.6 18"><g fill="none" stroke="#e07060" stroke-width="1.1"><circle cx="8.8" cy="2" r="1.4"/><path d="M8.3 3.3L0.7 17.6M9.3 3.3L16.9 17.6"/><path d="M0.8 2.6C2 7 4 10.6 7 11.6C9.6 12.4 12 11.6 13.9 10.6"/></g></svg>
<span class="t" style="top:467.00px;font-size:15px;left:113.50px;letter-spacing:-0.264px;">Geometry 1</span>
<svg class="a" style="left:69.5px;top:490.5px;" width="7" height="11" viewBox="0 0 7 11"><path d="M0.7 0.8L5.6 5.5L0.7 10.2Z" fill="#fff" stroke="#8c8c8c" stroke-width="1.1"/></svg>
<svg class="a" style="left:89.5px;top:489px" width="12.8" height="12.4" viewBox="0 0 25.5 24.8"><rect x="9" y="0" width="7.2" height="6.9" rx="1.6" fill="#fcae1e"/><rect x="0.2" y="5" width="7.2" height="6.9" rx="1.6" fill="#fcae1e"/><rect x="18.1" y="5" width="7.2" height="6.9" rx="1.6" fill="#f59120"/><rect x="9" y="9" width="7.2" height="6.9" rx="1.6" fill="#f59120"/><rect x="0.2" y="14" width="7.2" height="6.9" rx="1.6" fill="#f59120"/><rect x="18.1" y="14" width="7.2" height="6.9" rx="1.6" fill="#d07818"/><rect x="9" y="17.8" width="7.2" height="6.9" rx="1.6" fill="#d07818"/></svg>
<span class="t" style="top:489.00px;font-size:15px;left:113.50px;letter-spacing:-0.032px;">Materials</span>
<svg class="a" style="left:67.9px;top:513.1px;" width="9" height="8" viewBox="0 0 9 8"><path d="M8.6 0V7.8H0.4Z" fill="#222"/></svg>
<svg class="a" style="left:86.6px;top:509px;" width="18.4" height="17" viewBox="0 0 18.4 17"><path d="M0 0L11 6.6L7.6 8.2L16 16.4L3.6 9.8L7.4 8.2Z" fill="#4a7ab5"/><path d="M3.2 14.4H6.2M4.7 12.9V15.9" stroke="#d02060" stroke-width="1"/><path d="M15.2 14H18" stroke="#4a7ab5" stroke-width="1"/></svg>
<span class="t" style="top:511.00px;font-size:15px;left:113.50px;letter-spacing:-0.329px;">Electric Currents</span>
<span class="t" style="top:511.00px;font-size:15px;font-style:italic;left:226.70px;letter-spacing:-1.181px;">(ec)</span>
<svg class="a" style="left:94.5px;top:534.5px;" width="7" height="11" viewBox="0 0 7 11"><path d="M0.7 0.8L5.6 5.5L0.7 10.2Z" fill="#fff" stroke="#8c8c8c" stroke-width="1.1"/></svg>
<svg class="a" style="left:112.2px;top:531.1px;" width="20" height="21" viewBox="0 0 20 21"><rect x="0.1" y="2.8" width="17.8" height="11.8" rx="4.6" fill="#1268c4"/><rect x="-1.2" y="-0.7" width="6.8" height="7.2" fill="#fff"/><rect x="0.5" y="1.0" width="3.4" height="4.4" fill="#fff" stroke="#333" stroke-width="1"/></svg>
<span class="t" style="top:533.00px;font-size:15px;left:138.50px;letter-spacing:-0.313px;">Current Conservation 1</span>
<svg class="a" style="left:94.5px;top:556.5px;" width="7" height="11" viewBox="0 0 7 11"><path d="M0.7 0.8L5.6 5.5L0.7 10.2Z" fill="#fff" stroke="#8c8c8c" stroke-width="1.1"/></svg>
<svg class="a" style="left:112.2px;top:553.1px;" width="20" height="18" viewBox="0 0 20 18"><rect x="0.6" y="3.3" width="16.8" height="10.8" rx="4.4" fill="#fff" stroke="#4a90d0" stroke-width="1.1"/><path d="M0.7 8.7H17.3V9.7Q17.3 14 13 14H5Q0.7 14 0.7 9.7Z" fill="#dfe1e3" stroke="#4a90d0" stroke-width="1.1"/><rect x="-1.2" y="-0.7" width="6.8" height="7.2" fill="#fff"/><rect x="0.5" y="1.0" width="3.4" height="4.4" fill="#fff" stroke="#333" stroke-width="1"/></svg>
<span class="t" style="top:555.00px;font-size:15px;left:138.50px;letter-spacing:-0.179px;">Electric Insulation 1</span>
<svg class="a" style="left:94.5px;top:578.5px;" width="7" height="11" viewBox="0 0 7 11"><path d="M0.7 0.8L5.6 5.5L0.7 10.2Z" fill="#fff" stroke="#8c8c8c" stroke-width="1.1"/></svg>
<svg class="a" style="left:112.2px;top:575.1px;" width="20" height="21" viewBox="0 0 20 21"><rect x="0.1" y="2.8" width="17.8" height="11.8" rx="4.6" fill="#1268c4"/><rect x="-1.2" y="-0.7" width="6.8" height="7.2" fill="#fff"/><rect x="0.5" y="1.0" width="3.4" height="4.4" fill="#fff" stroke="#333" stroke-width="1"/></svg>
<span class="t" style="top:577.00px;font-size:15px;left:138.50px;letter-spacing:-0.197px;">Initial Values 1</span>
<svg class="a" style="left:94.5px;top:600.5px;" width="7" height="11" viewBox="0 0 7 11"><path d="M0.7 0.8L5.6 5.5L0.7 10.2Z" fill="#fff" stroke="#8c8c8c" stroke-width="1.1"/></svg>
<svg class="a" style="left:112.1px;top:597.1px;" width="20" height="21" viewBox="0 0 20 21"><rect x="0.1" y="2.8" width="17.8" height="11.8" rx="4.6" fill="#1268c4"/></svg>
<span class="t" style="top:599.00px;font-size:15px;left:138.50px;letter-spacing:-0.178px;">Terminal 1</span>
<svg class="a" style="left:94.5px;top:622.5px;" width="7" height="11" viewBox="0 0 7 11"><path d="M0.7 0.8L5.6 5.5L0.7 10.2Z" fill="#fff" stroke="#8c8c8c" stroke-width="1.1"/></svg>
<svg class="a" style="left:112.1px;top:619.1px;" width="20" height="21" viewBox="0 0 20 21"><rect x="0.1" y="2.8" width="17.8" height="11.8" rx="4.6" fill="#1268c4"/></svg>
<span class="t" style="top:621.00px;font-size:15px;left:138.50px;letter-spacing:-0.089px;">Terminal 2</span>
<span class="t" style="top:640.00px;font-size:9px;color:#5b88c0;font-weight:bold;left:111.10px;">∂u</span>
<div class="a" style="left:111.10000000000001px;top:648.0999999999999px;width:10.8px;height:1.1px;background:#5b88c0;"></div>
<span class="t" style="top:649.00px;font-size:9px;color:#5b88c0;font-weight:bold;left:111.30px;">∂t</span>
<span class="t" style="top:642.00px;font-size:10.5px;color:#5b88c0;font-weight:bold;left:121.90px;letter-spacing:-0.5px;">=f</span>
<span class="t" style="top:643.00px;font-size:15px;left:138.50px;letter-spacing:-0.102px;">Equation View</span>
<svg class="a" style="left:67.9px;top:667.1px;" width="9" height="8" viewBox="0 0 9 8"><path d="M8.6 0V7.8H0.4Z" fill="#222"/></svg>
<svg class="a" style="left:87.7px;top:663px" width="16.0" height="18.8" viewBox="0 0 32 37.5"><rect x="0.0" y="0" width="1.2" height="12.7" fill="#5a88c2"/><rect x="3.8000000000000003" y="1.1" width="1.2" height="10" fill="#5a88c2"/><rect x="7.5" y="2.6" width="1.2" height="7.1" fill="#5a88c2"/><rect x="11.3" y="4" width="1.2" height="4.6" fill="#5a88c2"/><rect x="18.799999999999997" y="4" width="1.2" height="4.6" fill="#5a88c2"/><rect x="22.599999999999998" y="2.6" width="1.2" height="7.1" fill="#5a88c2"/><rect x="26.4" y="1.1" width="1.2" height="10" fill="#5a88c2"/><rect x="30.4" y="0" width="1.2" height="12.7" fill="#5a88c2"/><path d="M15.8 5.3V18" stroke="#4a7ab5" stroke-width="1.4"/><path d="M5.5 35V37.4M26.2 35V37.4" stroke="#4a7ab5" stroke-width="2.4"/><path d="M0.7 35V20.5Q0.7 18.2 3 18.2H28.6Q30.9 18.2 30.9 20.5V35Z" fill="#e6e6e6" stroke="#4a7ab5" stroke-width="1.3"/><rect x="5" y="21.4" width="21.6" height="3.6" fill="#5a88c2"/><path d="M6.5 23.2H25.5" stroke="#c8d8ee" stroke-width="1.2" stroke-dasharray="1.3 1.4"/><rect x="5.4" y="27.8" width="3.4" height="3.2" fill="#5a88c2"/><rect x="22.8" y="27.8" width="3.4" height="3.2" fill="#5a88c2"/></svg>
<span class="t" style="top:665.00px;font-size:15px;left:113.50px;letter-spacing:-0.204px;">Electromagnetic Waves, Frequency Domain</span>
<span class="t" style="top:665.00px;font-size:15px;font-style:italic;left:405.60px;letter-spacing:-0.493px;">(emw)</span>
<svg class="a" style="left:92.9px;top:689.1px;" width="9" height="8" viewBox="0 0 9 8"><path d="M8.6 0V7.8H0.4Z" fill="#222"/></svg>
<svg class="a" style="left:112.2px;top:685.1px;" width="20" height="21" viewBox="0 0 20 21"><rect x="0.1" y="2.8" width="17.8" height="11.8" rx="4.6" fill="#1268c4"/><rect x="-1.2" y="-0.7" width="6.8" height="7.2" fill="#fff"/><rect x="0.5" y="1.0" width="3.4" height="4.4" fill="#fff" stroke="#333" stroke-width="1"/><rect x="9.8" y="10.4" width="9.4" height="9.2" fill="#fff"/><rect x="11" y="14.6" width="7.8" height="6" rx="0.6" fill="#8a8a8a"/><path d="M12.7 14.8V13.4A2.2 2.2 0 0 1 17.1 13.4V14.8" fill="none" stroke="#8a8a8a" stroke-width="1.3"/></svg>
<span class="t" style="top:687.00px;font-size:15px;left:138.50px;letter-spacing:-0.271px;">Wave Equation, Electric 1</span>
<span class="t" style="top:706.00px;font-size:9px;color:#5b88c0;font-weight:bold;left:136.10px;">∂u</span>
<div class="a" style="left:136.1px;top:714.0999999999999px;width:10.8px;height:1.1px;background:#5b88c0;"></div>
<span class="t" style="top:715.00px;font-size:9px;color:#5b88c0;font-weight:bold;left:136.30px;">∂t</span>
<span class="t" style="top:708.00px;font-size:10.5px;color:#5b88c0;font-weight:bold;left:146.90px;letter-spacing:-0.5px;">=f</span>
<span class="t" style="top:709.00px;font-size:15px;left:163.50px;letter-spacing:-0.094px;">Equation View</span>
<svg class="a" style="left:94.5px;top:732.5px;" width="7" height="11" viewBox="0 0 7 11"><path d="M0.7 0.8L5.6 5.5L0.7 10.2Z" fill="#fff" stroke="#8c8c8c" stroke-width="1.1"/></svg>
<svg class="a" style="left:112.2px;top:729.1px;" width="20" height="18" viewBox="0 0 20 18"><rect x="0.6" y="3.3" width="16.8" height="10.8" rx="4.4" fill="#fff" stroke="#4a90d0" stroke-width="1.1"/><path d="M0.7 8.7H17.3V9.7Q17.3 14 13 14H5Q0.7 14 0.7 9.7Z" fill="#dfe1e3" stroke="#4a90d0" stroke-width="1.1"/><rect x="-1.2" y="-0.7" width="6.8" height="7.2" fill="#fff"/><rect x="0.5" y="1.0" width="3.4" height="4.4" fill="#fff" stroke="#333" stroke-width="1"/></svg>
<span class="t" style="top:731.00px;font-size:15px;left:138.50px;letter-spacing:-0.235px;">Perfect Electric Conductor 1</span>
<svg class="a" style="left:94.5px;top:754.5px;" width="7" height="11" viewBox="0 0 7 11"><path d="M0.7 0.8L5.6 5.5L0.7 10.2Z" fill="#fff" stroke="#8c8c8c" stroke-width="1.1"/></svg>
<svg class="a" style="left:112.2px;top:751.1px;" width="20" height="21" viewBox="0 0 20 21"><rect x="0.1" y="2.8" width="17.8" height="11.8" rx="4.6" fill="#1268c4"/><rect x="-1.2" y="-0.7" width="6.8" height="7.2" fill="#fff"/><rect x="0.5" y="1.0" width="3.4" height="4.4" fill="#fff" stroke="#333" stroke-width="1"/></svg>
<span class="t" style="top:753.00px;font-size:15px;left:138.50px;letter-spacing:-0.224px;">Initial Values 1</span>
<svg class="a" style="left:94.5px;top:776.5px;" width="7" height="11" viewBox="0 0 7 11"><path d="M0.7 0.8L5.6 5.5L0.7 10.2Z" fill="#fff" stroke="#8c8c8c" stroke-width="1.1"/></svg>
<svg class="a" style="left:112.2px;top:773.1px;" width="20" height="18" viewBox="0 0 20 18"><rect x="0.6" y="3.3" width="16.8" height="10.8" rx="4.4" fill="#fff" stroke="#4a90d0" stroke-width="1.1"/><path d="M0.7 8.7H17.3V9.7Q17.3 14 13 14H5Q0.7 14 0.7 9.7Z" fill="#dfe1e3" stroke="#4a90d0" stroke-width="1.1"/></svg>
<span class="t" style="top:775.00px;font-size:15px;left:138.50px;letter-spacing:-0.086px;">Scattering Boundary Condition 1</span>
<svg class="a" style="left:94.5px;top:798.5px;" width="7" height="11" viewBox="0 0 7 11"><path d="M0.7 0.8L5.6 5.5L0.7 10.2Z" fill="#fff" stroke="#8c8c8c" stroke-width="1.1"/></svg>
<svg class="a" style="left:112.2px;top:795.1px;" width="20" height="18" viewBox="0 0 20 18"><rect x="0.6" y="3.3" width="16.8" height="10.8" rx="4.4" fill="#fff" stroke="#4a90d0" stroke-width="1.1"/><path d="M0.7 8.7H17.3V9.7Q17.3 14 13 14H5Q0.7 14 0.7 9.7Z" fill="#dfe1e3" stroke="#4a90d0" stroke-width="1.1"/></svg>
<span class="t" style="top:797.00px;font-size:15px;left:138.50px;letter-spacing:-0.069px;">Scattering Boundary Condition 2</span>
<span class="t" style="top:816.00px;font-size:9px;color:#5b88c0;font-weight:bold;left:111.10px;">∂u</span>
<div class="a" style="left:111.10000000000001px;top:824.0999999999999px;width:10.8px;height:1.1px;background:#5b88c0;"></div>
<span class="t" style="top:825.00px;font-size:9px;color:#5b88c0;font-weight:bold;left:111.30px;">∂t</span>
<span class="t" style="top:818.00px;font-size:10.5px;color:#5b88c0;font-weight:bold;left:121.90px;letter-spacing:-0.5px;">=f</span>
<span class="t" style="top:819.00px;font-size:15px;left:138.50px;letter-spacing:-0.094px;">Equation View</span>
<svg class="a" style="left:86.3px;top:839.4px" width="19.4" height="16.7" viewBox="0 0 38.8 33.4"><path d="M18.9 0.6L38 32.6H0.8Z" fill="#d9dcdf"/><path d="M15.3 7.0H22.7M8.2 32.6L22.7 7.0M8.2 32.6L4.4 26.2M11.7 13.4H26.5M15.7 32.6L26.5 13.4M15.7 32.6L8.0 19.8M8.0 19.8H30.4M23.1 32.6L30.4 19.8M23.1 32.6L11.7 13.4M4.4 26.2H34.2M30.6 32.6L34.2 26.2M30.6 32.6L15.3 7.0" stroke="#7d8b99" stroke-width="0.8" fill="none"/><path d="M18.9 0.6L38 32.6H0.8Z" fill="none" stroke="#4f5f70" stroke-width="1.9" stroke-linejoin="round"/></svg>
<span class="t" style="top:841.00px;font-size:15px;left:113.50px;letter-spacing:-0.741px;">Mesh 1</span>
<svg class="a" style="left:44.5px;top:864.5px;" width="7" height="11" viewBox="0 0 7 11"><path d="M0.7 0.8L5.6 5.5L0.7 10.2Z" fill="#fff" stroke="#8c8c8c" stroke-width="1.1"/></svg>
<svg class="a" style="left:61.4px;top:863.2px" width="19.1" height="8.9" viewBox="0 0 37.5 17.5"><g fill="none" stroke="#1a8096" stroke-width="2.2" stroke-linecap="round"><circle cx="17.5" cy="11.9" r="4.7"/><circle cx="31.7" cy="11.9" r="4.7"/><path d="M22.2 11.4H27"/><path d="M12.9 10.5L5.8 3.9C4 2.3 1.6 3.5 0.9 9"/><path d="M36.2 9.5C35.5 6 30 2.5 26 1.3C24 0.8 23 2 22.9 4.6"/></g></svg>
<span class="t" style="top:863.00px;font-size:15px;left:88.50px;letter-spacing:-0.513px;">Study 1</span>
<svg class="a" style="left:42.9px;top:887.1px;" width="9" height="8" viewBox="0 0 9 8"><path d="M8.6 0V7.8H0.4Z" fill="#222"/></svg>
<svg class="a" style="left:61.6px;top:883.9px" width="18.6" height="16.6" viewBox="0 0 36.4 32.5"><path d="M0.2 15.4L13.3 24.5V32H13.3L0.2 23.2Z" fill="#878787"/><rect x="3.9" y="0.5" width="19.9" height="18" fill="#fff" stroke="#878787" stroke-width="0.9"/><rect x="6.3" y="2.9" width="15" height="9.8" fill="#ab246e"/><rect x="8.9" y="4.1" width="19.9" height="18" fill="#fff" stroke="#878787" stroke-width="0.9"/><rect x="11.3" y="6.5" width="15" height="9.8" fill="#ab246e"/><rect x="13.9" y="7.7" width="19.9" height="16.5" fill="#fff" stroke="#878787" stroke-width="0.9"/><rect x="16.3" y="10.1" width="15" height="9.8" fill="#ab246e"/><rect x="13.3" y="24.5" width="22.6" height="7.5" fill="#fff" stroke="#878787" stroke-width="0.9"/></svg>
<span class="t" style="top:885.00px;font-size:15px;left:88.50px;letter-spacing:-0.755px;">Results</span>
<svg class="a" style="left:69.5px;top:908.5px;" width="7" height="11" viewBox="0 0 7 11"><path d="M0.7 0.8L5.6 5.5L0.7 10.2Z" fill="#fff" stroke="#8c8c8c" stroke-width="1.1"/></svg>
<svg class="a" style="left:89.6px;top:906.6px;" width="13" height="16" viewBox="0 0 13 16"><rect x="0.0" y="0.0" width="2.6" height="1.7" fill="#c0307a"/><rect x="3.2" y="0.0" width="2.6" height="1.7" fill="#c0307a"/><rect x="6.4" y="0.0" width="2.6" height="1.7" fill="#c0307a"/><rect x="9.6" y="0.0" width="2.6" height="1.7" fill="#c9c9c9"/><rect x="0.0" y="2.6" width="2.6" height="1.7" fill="#c0307a"/><rect x="3.2" y="2.6" width="2.6" height="1.7" fill="#c0307a"/><rect x="6.4" y="2.6" width="2.6" height="1.7" fill="#c0307a"/><rect x="9.6" y="2.6" width="2.6" height="1.7" fill="#c9c9c9"/><rect x="0.0" y="5.2" width="2.6" height="1.7" fill="#c9c9c9"/><rect x="3.2" y="5.2" width="2.6" height="1.7" fill="#c0307a"/><rect x="6.4" y="5.2" width="2.6" height="1.7" fill="#c9c9c9"/><rect x="9.6" y="5.2" width="2.6" height="1.7" fill="#c9c9c9"/><rect x="0.0" y="7.8" width="2.6" height="1.7" fill="#c0307a"/><rect x="3.2" y="7.8" width="2.6" height="1.7" fill="#c0307a"/><rect x="6.4" y="7.8" width="2.6" height="1.7" fill="#c0307a"/><rect x="9.6" y="7.8" width="2.6" height="1.7" fill="#c9c9c9"/><rect x="0.0" y="10.4" width="2.6" height="1.7" fill="#c9c9c9"/><rect x="3.2" y="10.4" width="2.6" height="1.7" fill="#c0307a"/><rect x="6.4" y="10.4" width="2.6" height="1.7" fill="#c0307a"/><rect x="9.6" y="10.4" width="2.6" height="1.7" fill="#c9c9c9"/><rect x="0.0" y="13.0" width="2.6" height="1.7" fill="#c0307a"/><rect x="3.2" y="13.0" width="2.6" height="1.7" fill="#c0307a"/><rect x="6.4" y="13.0" width="2.6" height="1.7" fill="#c0307a"/><rect x="9.6" y="13.0" width="2.6" height="1.7" fill="#c9c9c9"/></svg>
<span class="t" style="top:907.00px;font-size:15px;left:113.50px;letter-spacing:-0.400px;">Datasets</span>
<span class="t" style="top:930.00px;font-size:6.5px;color:#c03080;font-weight:bold;left:89.40px;letter-spacing:0.315px;">8.85</span>
<span class="t" style="top:937.00px;font-size:6.5px;color:#c03080;font-weight:bold;left:89.40px;letter-spacing:0.261px;">e-12</span>
<span class="t" style="top:929.00px;font-size:15px;left:113.50px;letter-spacing:-0.270px;">Derived Values</span>
<div class="a" style="left:88px;top:949.3px;width:15.8px;height:1.8px;background:#c84a88;"></div>
<div class="a" style="left:495px;top:152px;width:188px;height:813px;border:1px solid #9ccaf6;"></div>
<span class="t" style="top:163.00px;font-size:26.5px;color:#3a98ee;left:505.90px;letter-spacing:-1.324px;">Settings</span>
<svg class="a" style="left:650px;top:171px;" width="11" height="6" viewBox="0 0 11 6"><path d="M0 0H11L5.5 6Z" fill="#444"/></svg>
<svg class="a" style="left:668.5px;top:168.5px;" width="9" height="12.5" viewBox="0 0 9 12.5"><path d="M1.8 0H7.2V5.6L9 7.6V8.6H5V12.5H4V8.6H0V7.6L1.8 5.6Z" fill="#444"/></svg>
<span class="t" style="top:200.00px;font-size:18px;color:#2b90ea;left:504.60px;letter-spacing:-0.219px;">Analytic</span>
<svg class="a" style="left:505.8px;top:225.6px;" width="16.6" height="12.4" viewBox="0 0 16.6 12.4"><rect x="0.5" y="0.5" width="15.6" height="11.4" fill="#f4f4f4" stroke="#cfcfcf"/><rect x="1" y="1" width="14.6" height="1.9" fill="#e2e2e2"/><rect x="1.2" y="3.2" width="13.2" height="7.2" fill="#b0246f"/><circle cx="4.6" cy="6.9" r="2.5" fill="none" stroke="#fff" stroke-width="1.1"/><path d="M2.8 6.9H5.6M4.6 5.6L6 6.9L4.6 8.2" stroke="#fff" stroke-width="0.9" fill="none"/></svg>
<svg class="a" style="left:564.2px;top:224.3px;" width="19.6" height="16" viewBox="0 0 19.6 16"><rect x="0.5" y="0.5" width="18.6" height="13.4" fill="#f2f2f2" stroke="#8a8a8a"/><rect x="1" y="1" width="17.6" height="2.2" fill="#c9c9c9"/><path d="M2.2 5.4H7M2.2 7.8H7M2.2 10.2H5.6" stroke="#3d6fae" stroke-width="1.1"/><rect x="8.8" y="4.6" width="9.2" height="8.4" fill="#b0246f"/><circle cx="9.8" cy="12" r="3.8" fill="#b0246f" stroke="#f2f2f2" stroke-width="0.8"/><path d="M7.6 12H11.6M10.2 10.4L11.8 12L10.2 13.6" stroke="#fff" stroke-width="1" fill="none"/></svg>
<span class="t" style="top:225.00px;font-size:15px;left:529.20px;letter-spacing:0.047px;">Plot</span>
<span class="t" style="top:225.00px;font-size:15px;left:589.40px;letter-spacing:-0.255px;">Create Plot</span>
<span class="t" style="top:267.00px;font-size:15px;left:502.60px;letter-spacing:-0.475px;">Label:</span>
<div class="a" style="left:614px;top:261px;width:26px;height:25px;overflow:hidden;background:#fff;border:2px solid #d2d2d2;border-right:none;border-bottom-width:1px"><span class="t" style="left:3px;top:3px;font-size:15px">Analytic 1</span></div>
<div class="a" style="left:651px;top:260px;width:25px;height:27.5px;background:#e9e9e9;border:2px solid #8f8f8f;border-radius:4.5px;"></div>
<svg class="a" style="left:655px;top:264.4px;" width="18" height="20" viewBox="0 0 18 20"><rect x="0.5" y="0.5" width="16.6" height="15.6" fill="#fff" stroke="#7a7a7a"/><rect x="1" y="1" width="15.6" height="2.6" fill="#9c9c9c"/><path d="M4 7.8H14.4M4 10.3H14.4" stroke="#5aa83a" stroke-width="1.1"/><rect x="-1.6" y="10.6" width="6.4" height="8" fill="#e9e9e9"/><path d="M-1.2 18.6L-0.6 12H4.2L3.6 13.4L-0.2 18.6Z" fill="#4a9a34"/><path d="M-1.2 12H4.4V17.2Z" fill="#4a9a34"/></svg>
<span class="t" style="top:301.00px;font-size:15px;left:502.60px;letter-spacing:-0.261px;">Function name:</span>
<div class="a" style="left:614.5px;top:295.5px;width:26px;height:23px;overflow:hidden;background:#fff;border:2px solid #d2d2d2;border-right:none;border-bottom-width:1px"><span class="t" style="left:3px;top:2.5px;font-size:15px">an1</span></div>
<div class="a" style="left:496px;top:331.5px;width:186.5px;height:31.0px;background:#dde8f6;"></div>
<svg class="a" style="left:503.5px;top:344.0px;" width="11" height="6" viewBox="0 0 11 6"><path d="M0 0H11L5.5 6.2Z" fill="#4a4a4a"/></svg>
<span class="t" style="top:339.00px;font-size:16.3px;color:#111;left:528.90px;letter-spacing:0.501px;">Definition</span>
<span class="t" style="top:380.00px;font-size:15px;left:502.60px;letter-spacing:-0.588px;">Expression:</span>
<div class="a" style="left:590px;top:373.5px;width:86px;height:24px;background:#fff;border:2px solid #d2d2d2;border-right:none;border-bottom-width:1px"></div>
<span class="t" style="top:379.00px;font-size:15px;left:594.20px;letter-spacing:-0.289px;">P_in*gp1(t) *</span>
<span class="t" style="top:412.00px;font-size:15px;left:502.60px;letter-spacing:-0.245px;">Arguments:</span>
<div class="a" style="left:590px;top:406.5px;width:86px;height:23px;overflow:hidden;background:#fff;border:2px solid #d2d2d2;border-right:none;border-bottom-width:1px"><span class="t" style="left:2.6px;top:3px;font-size:15px">t</span></div>
<span class="t" style="top:444.00px;font-size:15px;left:502.60px;letter-spacing:-0.169px;">Derivatives:</span>
<div class="a" style="left:590px;top:439.5px;width:86px;height:25px;background:linear-gradient(#f3f3f3,#e0e0e0);border:1.6px solid #8c8c8c;border-radius:4px;"></div>
<span class="t" style="top:444.00px;font-size:15px;color:#1a1a1a;left:606.00px;letter-spacing:0.160px;">Autom</span>
<svg class="a" style="left:662px;top:450.5px;" width="8" height="5" viewBox="0 0 8 5"><path d="M0 0H8L4 5Z" fill="#222"/></svg>
<div class="a" style="left:496px;top:479px;width:186.5px;height:31.5px;background:#dde8f6;"></div>
<svg class="a" style="left:505px;top:489.25px;" width="7" height="11" viewBox="0 0 7 11"><path d="M0.7 0.8L5.6 5.5L0.7 10.2Z" fill="#fff" stroke="#8c8c8c" stroke-width="1.1"/></svg>
<span class="t" style="top:487.00px;font-size:16.3px;color:#111;left:528.90px;letter-spacing:0.073px;">Periodic Extension</span>
<div class="a" style="left:496px;top:514.5px;width:186.5px;height:30.5px;background:#dde8f6;"></div>
<svg class="a" style="left:503.5px;top:526.75px;" width="11" height="6" viewBox="0 0 11 6"><path d="M0 0H11L5.5 6.2Z" fill="#4a4a4a"/></svg>
<span class="t" style="top:522.00px;font-size:16.3px;color:#111;left:528.90px;letter-spacing:0.123px;">Units</span>
<span class="t" style="top:563.00px;font-size:15px;left:502.60px;letter-spacing:-0.245px;">Arguments:</span>
<div class="a" style="left:590px;top:557.5px;width:74px;height:23px;overflow:hidden;background:#fff;border:2px solid #d2d2d2;border-right:none;border-bottom-width:1px"><span class="t" style="left:3px;top:2.5px;font-size:15px">s</span></div>
<span class="t" style="top:595.00px;font-size:15px;left:502.60px;letter-spacing:-0.400px;">Function:</span>
<div class="a" style="left:590px;top:589.5px;width:74px;height:23px;overflow:hidden;background:#fff;border:2px solid #d2d2d2;border-right:none;border-bottom-width:1px"><span class="t" style="left:3px;top:2.5px;font-size:15px">W</span></div>
<div class="a" style="left:496px;top:628px;width:186.5px;height:31.5px;background:#dde8f6;"></div>
<svg class="a" style="left:505px;top:638.25px;" width="7" height="11" viewBox="0 0 7 11"><path d="M0.7 0.8L5.6 5.5L0.7 10.2Z" fill="#fff" stroke="#8c8c8c" stroke-width="1.1"/></svg>
<span class="t" style="top:635.00px;font-size:16.3px;color:#111;left:528.90px;letter-spacing:0.097px;">Advanced</span>
<div class="a" style="left:496px;top:663px;width:186.5px;height:31px;background:#dde8f6;"></div>
<svg class="a" style="left:503.5px;top:675.5px;" width="11" height="6" viewBox="0 0 11 6"><path d="M0 0H11L5.5 6.2Z" fill="#4a4a4a"/></svg>
<span class="t" style="top:670.00px;font-size:16.3px;color:#111;left:528.90px;letter-spacing:0.169px;">Plot Parameters</span>
<div class="a" style="left:501.5px;top:707px;width:174px;height:80px;background:#fff;border:1px solid #d6d6d6;"></div>
<div class="a" style="left:502.5px;top:708px;width:172px;height:33px;background:linear-gradient(#ffffff,#f4f4f4);"></div>
<div class="a" style="left:601.5px;top:708px;width:1px;height:56px;background:#d6d6d6;"></div>
<div class="a" style="left:502.5px;top:741px;width:172px;height:1px;background:#d6d6d6;"></div>
<div class="a" style="left:502.5px;top:742px;width:99px;height:21.5px;background:#f0f0f0;"></div>
<div class="a" style="left:502.5px;top:763.5px;width:172px;height:1px;background:#d6d6d6;"></div>
<div class="a" style="left:502.5px;top:764.5px;width:172px;height:21.5px;background:#f0f0f0;"></div>
<div class="a" style="left:524px;top:764.5px;width:74.7px;height:21.5px;background:#cdcdcd;"></div>
<svg class="a" style="left:509px;top:770px;" width="7" height="11" viewBox="0 0 7 11"><path d="M5.5 1L1.5 5.5L5.5 10" fill="none" stroke="#8a8a8a" stroke-width="1.3"/></svg>
<svg class="a" style="left:660px;top:770px;" width="7" height="11" viewBox="0 0 7 11"><path d="M1.5 1L5.5 5.5L1.5 10" fill="none" stroke="#8a8a8a" stroke-width="1.3"/></svg>
<svg class="a" style="left:508px;top:711px;" width="12" height="8" viewBox="0 0 12 8"><path d="M0 0L5 4L0 8ZM6 0L11 4L6 8Z" fill="#333"/></svg>
<span class="t" style="top:720.00px;font-size:15px;left:525.00px;letter-spacing:0.136px;">Argument</span>
<span class="t" style="top:720.00px;font-size:15px;left:608.80px;letter-spacing:0.089px;">Lower lim</span>
<span class="t" style="top:746.00px;font-size:15px;left:506.60px;">t</span>
<span class="t" style="top:746.00px;font-size:15px;left:606.80px;letter-spacing:-0.484px;">2.75E-12</span>
<div class="a" style="left:689px;top:152px;width:1227px;height:813px;border:1px solid #d3d4d8;"></div>
<div class="a" style="left:695px;top:159px;width:132px;height:31px;background:#eaeaea;"></div>
<div class="a" style="left:837px;top:159px;width:76px;height:31px;background:#eaeaea;"></div>
<div class="a" style="left:923px;top:159px;width:75px;height:31px;background:#eaeaea;"></div>
<div class="a" style="left:1007.5px;top:159px;width:73.5px;height:31px;background:#eaeaea;"></div>
<div class="a" style="left:1091px;top:159px;width:37.5px;height:31px;background:#eaeaea;"></div>
<div class="a" style="left:690px;top:190px;width:1225px;height:1px;background:#d3d4d8;"></div>
<div class="a" style="left:1139px;top:159px;width:138px;height:32px;background:#fafbfe;border:1px solid #d3d4d8;border-bottom:none;"></div>
<span class="t" style="top:168.00px;font-size:16.5px;left:700.40px;letter-spacing:0.405px;">Add Material</span>
<span class="t" style="top:168.00px;font-size:16.5px;left:842.40px;letter-spacing:-0.033px;">Graphics</span>
<span class="t" style="top:168.00px;font-size:16.5px;left:929.00px;letter-spacing:-0.333px;">Progress</span>
<span class="t" style="top:168.00px;font-size:16.5px;left:1013.20px;letter-spacing:-0.263px;">Table</span>
<span class="t" style="top:168.00px;font-size:16.5px;left:1096.80px;letter-spacing:-0.266px;">Log</span>
<span class="t" style="top:168.00px;font-size:16.5px;color:#2b5fa6;left:1145.50px;letter-spacing:0.332px;">Function Plot</span>
<svg class="a" style="left:807.8000000000001px;top:169.5px;" width="10.6" height="9.6" viewBox="0 0 10.6 9.6"><path d="M0.5 0.4L10.1 9.2M10.1 0.4L0.5 9.2" stroke="#c3cde0" stroke-width="1.3"/></svg>
<svg class="a" style="left:1062.5px;top:169.5px;" width="10.6" height="9.6" viewBox="0 0 10.6 9.6"><path d="M0.5 0.4L10.1 9.2M10.1 0.4L0.5 9.2" stroke="#c3cde0" stroke-width="1.3"/></svg>
<svg class="a" style="left:1256.0px;top:169.5px;" width="10.6" height="9.6" viewBox="0 0 10.6 9.6"><path d="M0.5 0.4L10.1 9.2M10.1 0.4L0.5 9.2" stroke="#a9bedd" stroke-width="1.3"/></svg>
<svg class="a" style="left:1881px;top:174px;" width="10" height="5" viewBox="0 0 10 5"><path d="M0 0H10L5 5Z" fill="#d0d4dc"/></svg>
<svg class="a" style="left:1896.5px;top:171px;" width="9" height="12.5" viewBox="0 0 9 12.5"><path d="M1.8 0H7.2V5.6L9 7.6V8.6H5V12.5H4V8.6H0V7.6L1.8 5.6Z" fill="#d0d4dc"/></svg>
<div class="a" style="left:690px;top:191px;width:1225px;height:35px;background:#f6f7fc;"></div>
<svg class="a" style="left:695px;top:196px" width="380" height="28" viewBox="695 196 380 28"><circle cx="707" cy="208.7" r="5.1" fill="#f6f7fc" stroke="#2f5888" stroke-width="1.6"/><path d="M710.9 212.6L714.8 215.9" stroke="#2f5888" stroke-width="2.4" stroke-linecap="round"/><path d="M704.2 208.7H709.8" stroke="#2f5888" stroke-width="1.5"/><path d="M707 205.89999999999998V211.5" stroke="#2f5888" stroke-width="1.5"/><circle cx="735.8" cy="208.7" r="5.1" fill="#f6f7fc" stroke="#2f5888" stroke-width="1.6"/><path d="M739.6999999999999 212.6L743 215.9" stroke="#2f5888" stroke-width="2.4" stroke-linecap="round"/><path d="M733.0 208.7H738.5999999999999" stroke="#2f5888" stroke-width="1.5"/><rect x="755.5" y="208.9" width="10.4" height="7.6" fill="none" stroke="#2f5888" stroke-width="1.1" stroke-dasharray="2.2 1.4"/><circle cx="765" cy="208.7" r="5.1" fill="#f6f7fc" stroke="#2f5888" stroke-width="1.6"/><path d="M768.9 212.6L773 215.9" stroke="#2f5888" stroke-width="2.4" stroke-linecap="round"/><path d="M762.2 208.7H767.8" stroke="#2f5888" stroke-width="1.5"/><path d="M765 205.89999999999998V211.5" stroke="#2f5888" stroke-width="1.5"/><path d="M781.9 207.1H791.1L786.5 212.4Z" fill="#1a1a1a"/><rect x="804.7" y="200.8" width="19" height="18.8" fill="#fafafa" stroke="#8f8f8f" stroke-width="1"/><path d="M805.2 219.6H823.7" stroke="#6a6a6a" stroke-width="1.2"/><path d="M814.4 203.5V217.5M807.5 210.5H821.5" stroke="#7a7a7a" stroke-width="1.1"/><path d="M814.4 201.4L816.3 203.9H812.5ZM814.4 219.2L816.3 216.9H812.5ZM805.4 210.5L807.9 208.6V212.4ZM823.4 210.5L820.9 208.6V212.4Z" fill="#4a86d0"/><path d="M833.6 200V219.7M927.4 200V219.7M965.4 200V219.7" stroke="#c9ccd4" stroke-width="1"/><path d="M845.5 202V216.6M852.8 202V216.6M847.6 202V216.6" stroke="#dfe6f0" stroke-width="1"/><path d="M849.5 202V216.8M856.2 202V216.8M858.6 202V216.8" stroke="#4a86d0" stroke-width="1.1"/><path d="M843.3 202.6V216" stroke="#8a8a8a" stroke-width="1.2" stroke-dasharray="1 2"/><path d="M845.6 218.4H860" stroke="#8a8a8a" stroke-width="1.2" stroke-dasharray="1 2.2"/><path d="M874 202.4H888.2" stroke="#a9c6ec" stroke-width="1.6"/><path d="M874 205.4H888.2M874 215.2H888.2" stroke="#dfe6f0" stroke-width="1"/><path d="M874 208.5H888.2M874 212.4H888.2" stroke="#4a86d0" stroke-width="1.1"/><path d="M871.6 202.6V216" stroke="#8a8a8a" stroke-width="1.2" stroke-dasharray="1 2"/><path d="M874 218.4H888.4" stroke="#8a8a8a" stroke-width="1.2" stroke-dasharray="1 2.2"/><defs><linearGradient id="lg1" x1="0" y1="0" x2="0" y2="1"><stop offset="0" stop-color="#d6eafc"/><stop offset="1" stop-color="#a6cff5"/></linearGradient><linearGradient id="lg2" x1="0" y1="0" x2="0" y2="1"><stop offset="0" stop-color="#2a3f9a"/><stop offset="0.35" stop-color="#f0a020"/><stop offset="1" stop-color="#e0203a"/></linearGradient></defs><rect x="897.8" y="199.8" width="20.6" height="20.4" rx="3" fill="url(#lg1)" stroke="#2a5aa8" stroke-width="1.4"/><rect x="900.4" y="202.9" width="15.2" height="13.6" fill="url(#lg1)" stroke="#8a8a8a" stroke-width="1"/><path d="M900.4 216.5H915.6" stroke="#5a5a5a" stroke-width="1.1"/><rect x="911.2" y="205" width="2.3" height="9.2" fill="url(#lg2)"/><rect x="939.9" y="207.7" width="11.9" height="9.1" rx="0.8" fill="#4a80bd"/><path d="M942.6 208V205.4A3.2 3.2 0 0 1 949 205.4V208" fill="none" stroke="#4a80bd" stroke-width="2"/><circle cx="983.7" cy="209.7" r="8.6" fill="#4a80bd"/><path d="M987.55 211.11L984.41 213.74L980.56 212.33L979.85 208.29L982.99 205.66L986.84 207.07Z" fill="#f6f7fc"/><path d="M987.36 211.04L986.27 218.95M984.37 213.54L976.97 216.55M980.71 212.20L974.41 207.30M980.04 208.36L981.13 200.45M983.03 205.86L990.43 202.85M986.69 207.20L992.99 212.10" stroke="#f6f7fc" stroke-width="1.5"/><path d="M1001.7 207.1H1011.1L1006.4 212.4Z" fill="#1a1a1a"/><path d="M1026.2 205.4H1029.6L1030.6 203.6H1037.2L1038.2 205.4H1041.4V214.7H1026.2Z" fill="#4a80bd"/><circle cx="1034" cy="209.9" r="3" fill="#4a80bd" stroke="#f6f7fc" stroke-width="1.1"/><rect x="1027.4" y="206.4" width="1.6" height="1" fill="#f6f7fc"/><rect x="1053.9" y="207.5" width="16.1" height="9.2" rx="1" fill="#4a80bd"/><rect x="1057.2" y="201.6" width="9.8" height="6.4" fill="#fff" stroke="#4a80bd" stroke-width="1.2"/><rect x="1056.4" y="214.6" width="11.2" height="3.4" fill="#fff" stroke="#4a80bd" stroke-width="0.9"/><rect x="1067" y="209.6" width="1.2" height="1.2" fill="#fff"/><rect x="1067" y="211.8" width="1.2" height="1.2" fill="#fff"/></svg>
<div class="a" style="left:690px;top:226px;width:1225px;height:738px;background:#fff;"></div>
<svg class="a" style="left:0;top:0" width="1916" height="967" viewBox="0 0 1916 967"><path d="M791.0 283.5V918.5" stroke="#ececec" stroke-width="1.9"/><path d="M901.0 283.5V918.5" stroke="#ececec" stroke-width="1.9"/><path d="M1011.0 283.5V918.5" stroke="#ececec" stroke-width="1.9"/><path d="M1122.0 283.5V918.5" stroke="#ececec" stroke-width="1.9"/><path d="M1232.0 283.5V918.5" stroke="#ececec" stroke-width="1.9"/><path d="M1342.0 283.5V918.5" stroke="#ececec" stroke-width="1.9"/><path d="M1452.0 283.5V918.5" stroke="#ececec" stroke-width="1.9"/><path d="M1562.0 283.5V918.5" stroke="#ececec" stroke-width="1.9"/><path d="M1673.0 283.5V918.5" stroke="#ececec" stroke-width="1.9"/><path d="M1783.0 283.5V918.5" stroke="#ececec" stroke-width="1.9"/><path d="M1893.0 283.5V918.5" stroke="#ececec" stroke-width="1.9"/><path d="M776.5 297.0H1906.5" stroke="#ececec" stroke-width="1.9"/><path d="M776.5 358.0H1906.5" stroke="#ececec" stroke-width="1.9"/><path d="M776.5 419.0H1906.5" stroke="#ececec" stroke-width="1.9"/><path d="M776.5 479.0H1906.5" stroke="#ececec" stroke-width="1.9"/><path d="M776.5 540.0H1906.5" stroke="#ececec" stroke-width="1.9"/><path d="M776.5 601.0H1906.5" stroke="#ececec" stroke-width="1.9"/><path d="M776.5 662.0H1906.5" stroke="#ececec" stroke-width="1.9"/><path d="M776.5 723.0H1906.5" stroke="#ececec" stroke-width="1.9"/><path d="M776.5 783.0H1906.5" stroke="#ececec" stroke-width="1.9"/><path d="M776.5 844.0H1906.5" stroke="#ececec" stroke-width="1.9"/><path d="M776.5 905.0H1906.5" stroke="#ececec" stroke-width="1.9"/><path d="M790.50 600.6L790.66 600.6L792.10 600.9L793.53 601.2L794.97 600.9L796.40 600.6L797.84 600.9L799.27 601.2L800.71 600.9L802.14 600.5L803.58 600.9L805.01 601.3L806.45 600.9L807.88 600.5L809.32 600.9L810.75 601.3L812.19 600.9L813.62 600.4L815.06 600.9L816.49 601.4L817.93 600.9L819.36 600.3L820.80 600.9L822.23 601.5L823.67 600.9L825.10 600.3L826.54 600.9L827.97 601.6L829.40 600.9L830.84 600.2L832.28 600.9L833.71 601.7L835.14 600.9L836.58 600.1L838.02 600.9L839.45 601.8L840.88 600.9L842.32 600.0L843.76 600.9L845.19 601.9L846.62 600.9L848.06 599.8L849.50 600.9L850.93 602.1L852.37 600.9L853.80 599.7L855.24 600.9L856.67 602.2L858.11 600.9L859.54 599.5L860.98 600.9L862.41 602.4L863.85 600.9L865.28 599.3L866.72 600.9L868.15 602.6L869.59 600.9L871.02 599.1L872.46 600.9L873.89 602.8L875.33 600.9L876.76 598.9L878.20 600.9L879.63 603.1L881.07 600.9L882.50 598.6L883.93 600.9L885.37 603.4L886.81 600.9L888.24 598.3L889.67 600.9L891.11 603.7L892.55 600.9L893.98 598.0L895.41 600.9L896.85 604.0L898.29 600.9L899.72 597.6L901.15 600.9L902.59 604.4L904.03 600.9L905.46 597.2L906.89 600.9L908.33 604.8L909.77 600.9L911.20 596.7L912.63 600.9L914.07 605.3L915.51 600.9L916.94 596.2L918.38 600.9L919.81 605.9L921.25 600.9L922.68 595.7L924.12 600.9L925.55 606.4L926.99 600.9L928.42 595.1L929.86 600.9L931.29 607.1L932.73 600.9L934.16 594.4L935.60 600.9L937.03 607.8L938.47 600.9L939.90 593.6L941.34 600.9L942.77 608.6L944.21 600.9L945.64 592.8L947.08 600.9L948.51 609.4L949.95 600.9L951.38 591.9L952.82 600.9L954.25 610.3L955.69 600.9L957.12 591.0L958.56 600.9L959.99 611.4L961.42 600.9L962.86 589.9L964.30 600.9L965.73 612.5L967.16 600.9L968.60 588.8L970.04 600.9L971.47 613.7L972.90 600.9L974.34 587.5L975.78 600.9L977.21 615.0L978.64 600.9L980.08 586.1L981.52 600.9L982.95 616.4L984.38 600.9L985.82 584.7L987.26 600.9L988.69 617.9L990.12 600.9L991.56 583.1L993.00 600.9L994.43 619.6L995.87 600.9L997.30 581.3L998.74 600.9L1000.17 621.4L1001.61 600.9L1003.04 579.5L1004.48 600.9L1005.91 623.3L1007.35 600.9L1008.78 577.5L1010.22 600.9L1011.65 625.4L1013.09 600.9L1014.52 575.3L1015.96 600.9L1017.39 627.6L1018.83 600.9L1020.26 573.0L1021.70 600.9L1023.13 630.0L1024.57 600.9L1026.00 570.6L1027.43 600.9L1028.87 632.5L1030.31 600.9L1031.74 568.0L1033.17 600.9L1034.61 635.2L1036.05 600.9L1037.48 565.2L1038.91 600.9L1040.35 638.1L1041.79 600.9L1043.22 562.2L1044.65 600.9L1046.09 641.2L1047.53 600.9L1048.96 559.0L1050.39 600.9L1051.83 644.4L1053.27 600.9L1054.70 555.7L1056.13 600.9L1057.57 647.9L1059.01 600.9L1060.44 552.1L1061.88 600.9L1063.31 651.5L1064.75 600.9L1066.18 548.4L1067.62 600.9L1069.05 655.4L1070.49 600.9L1071.92 544.4L1073.36 600.9L1074.79 659.4L1076.22 600.9L1077.66 540.3L1079.10 600.9L1080.53 663.7L1081.97 600.9L1083.40 535.9L1084.84 600.9L1086.27 668.1L1087.70 600.9L1089.14 531.3L1090.58 600.9L1092.01 672.8L1093.45 600.9L1094.88 526.6L1096.32 600.9L1097.75 677.7L1099.18 600.9L1100.62 521.6L1102.06 600.9L1103.49 682.8L1104.92 600.9L1106.36 516.4L1107.80 600.9L1109.23 688.0L1110.66 600.9L1112.10 511.0L1113.54 600.9L1114.97 693.5L1116.40 600.9L1117.84 505.5L1119.28 600.9L1120.71 699.2L1122.14 600.9L1123.58 499.7L1125.02 600.9L1126.45 705.1L1127.88 600.9L1129.32 493.7L1130.76 600.9L1132.19 711.1L1133.62 600.9L1135.06 487.6L1136.50 600.9L1137.93 717.3L1139.37 600.9L1140.80 481.3L1142.24 600.9L1143.67 723.7L1145.11 600.9L1146.54 474.8L1147.98 600.9L1149.41 730.2L1150.85 600.9L1152.28 468.2L1153.72 600.9L1155.15 736.9L1156.59 600.9L1158.02 461.5L1159.45 600.9L1160.89 743.7L1162.33 600.9L1163.76 454.6L1165.20 600.9L1166.63 750.6L1168.07 600.9L1169.50 447.7L1170.93 600.9L1172.37 757.6L1173.81 600.9L1175.24 440.6L1176.67 600.9L1178.11 764.7L1179.55 600.9L1180.98 433.5L1182.41 600.9L1183.85 771.9L1185.29 600.9L1186.72 426.3L1188.15 600.9L1189.59 779.1L1191.03 600.9L1192.46 419.1L1193.89 600.9L1195.33 786.3L1196.77 600.9L1198.20 411.9L1199.63 600.9L1201.07 793.5L1202.51 600.9L1203.94 404.7L1205.38 600.9L1206.81 800.6L1208.25 600.9L1209.68 397.6L1211.12 600.9L1212.55 807.8L1213.99 600.9L1215.42 390.5L1216.86 600.9L1218.29 814.8L1219.73 600.9L1221.16 383.5L1222.60 600.9L1224.03 821.8L1225.47 600.9L1226.90 376.6L1228.34 600.9L1229.77 828.6L1231.20 600.9L1232.64 369.8L1234.08 600.9L1235.51 835.3L1236.94 600.9L1238.38 363.2L1239.82 600.9L1241.25 841.8L1242.68 600.9L1244.12 356.8L1245.56 600.9L1246.99 848.2L1248.42 600.9L1249.86 350.6L1251.30 600.9L1252.73 854.3L1254.16 600.9L1255.60 344.6L1257.04 600.9L1258.47 860.1L1259.90 600.9L1261.34 338.8L1262.78 600.9L1264.21 865.7L1265.64 600.9L1267.08 333.4L1268.52 600.9L1269.95 871.0L1271.38 600.9L1272.82 328.2L1274.26 600.9L1275.69 876.0L1277.12 600.9L1278.56 323.4L1280.00 600.9L1281.43 880.7L1282.87 600.9L1284.30 318.9L1285.74 600.9L1287.17 885.0L1288.61 600.9L1290.04 314.8L1291.48 600.9L1292.91 888.9L1294.35 600.9L1295.78 311.1L1297.22 600.9L1298.65 892.4L1300.09 600.9L1301.52 307.8L1302.95 600.9L1304.39 895.6L1305.83 600.9L1307.26 304.8L1308.69 600.9L1310.13 898.3L1311.57 600.9L1313.00 302.3L1314.43 600.9L1315.87 900.5L1317.31 600.9L1318.74 300.3L1320.17 600.9L1321.61 902.4L1323.05 600.9L1324.48 298.7L1325.91 600.9L1327.35 903.8L1328.79 600.9L1330.22 297.5L1331.65 600.9L1333.09 904.7L1334.53 600.9L1335.96 296.8L1337.39 600.9L1338.83 905.1L1340.27 600.9L1341.70 296.6L1343.13 600.9L1344.57 905.1L1346.01 600.9L1347.44 296.8L1348.88 600.9L1350.31 904.7L1351.75 600.9L1353.18 297.5L1354.62 600.9L1356.05 903.8L1357.49 600.9L1358.92 298.7L1360.36 600.9L1361.79 902.4L1363.23 600.9L1364.66 300.3L1366.10 600.9L1367.53 900.5L1368.97 600.9L1370.40 302.3L1371.84 600.9L1373.27 898.3L1374.71 600.9L1376.14 304.8L1377.58 600.9L1379.01 895.6L1380.45 600.9L1381.88 307.8L1383.32 600.9L1384.75 892.4L1386.18 600.9L1387.62 311.1L1389.06 600.9L1390.49 888.9L1391.92 600.9L1393.36 314.8L1394.80 600.9L1396.23 885.0L1397.66 600.9L1399.10 318.9L1400.54 600.9L1401.97 880.7L1403.40 600.9L1404.84 323.4L1406.28 600.9L1407.71 876.0L1409.14 600.9L1410.58 328.2L1412.02 600.9L1413.45 871.0L1414.88 600.9L1416.32 333.4L1417.76 600.9L1419.19 865.7L1420.62 600.9L1422.06 338.8L1423.50 600.9L1424.93 860.1L1426.37 600.9L1427.80 344.6L1429.24 600.9L1430.67 854.3L1432.11 600.9L1433.54 350.6L1434.98 600.9L1436.41 848.2L1437.85 600.9L1439.28 356.8L1440.72 600.9L1442.15 841.8L1443.59 600.9L1445.02 363.2L1446.46 600.9L1447.89 835.3L1449.33 600.9L1450.76 369.8L1452.20 600.9L1453.63 828.6L1455.07 600.9L1456.50 376.6L1457.93 600.9L1459.37 821.8L1460.81 600.9L1462.24 383.5L1463.67 600.9L1465.11 814.8L1466.55 600.9L1467.98 390.5L1469.41 600.9L1470.85 807.8L1472.29 600.9L1473.72 397.6L1475.15 600.9L1476.59 800.6L1478.03 600.9L1479.46 404.7L1480.89 600.9L1482.33 793.5L1483.77 600.9L1485.20 411.9L1486.63 600.9L1488.07 786.3L1489.51 600.9L1490.94 419.1L1492.38 600.9L1493.81 779.1L1495.25 600.9L1496.68 426.3L1498.12 600.9L1499.55 771.9L1500.99 600.9L1502.42 433.5L1503.86 600.9L1505.29 764.7L1506.73 600.9L1508.16 440.6L1509.60 600.9L1511.03 757.6L1512.47 600.9L1513.90 447.7L1515.34 600.9L1516.77 750.6L1518.20 600.9L1519.64 454.6L1521.08 600.9L1522.51 743.7L1523.95 600.9L1525.38 461.5L1526.82 600.9L1528.25 736.9L1529.68 600.9L1531.12 468.2L1532.56 600.9L1533.99 730.2L1535.42 600.9L1536.86 474.8L1538.30 600.9L1539.73 723.7L1541.16 600.9L1542.60 481.3L1544.04 600.9L1545.47 717.3L1546.90 600.9L1548.34 487.6L1549.78 600.9L1551.21 711.1L1552.64 600.9L1554.08 493.7L1555.52 600.9L1556.95 705.1L1558.38 600.9L1559.82 499.7L1561.26 600.9L1562.69 699.2L1564.12 600.9L1565.56 505.5L1567.00 600.9L1568.43 693.5L1569.87 600.9L1571.30 511.0L1572.74 600.9L1574.17 688.0L1575.61 600.9L1577.04 516.4L1578.48 600.9L1579.91 682.8L1581.35 600.9L1582.78 521.6L1584.22 600.9L1585.65 677.7L1587.09 600.9L1588.52 526.6L1589.95 600.9L1591.39 672.8L1592.83 600.9L1594.26 531.3L1595.70 600.9L1597.13 668.1L1598.57 600.9L1600.00 535.9L1601.43 600.9L1602.87 663.7L1604.31 600.9L1605.74 540.3L1607.18 600.9L1608.61 659.4L1610.05 600.9L1611.48 544.4L1612.91 600.9L1614.35 655.4L1615.79 600.9L1617.22 548.4L1618.65 600.9L1620.09 651.5L1621.53 600.9L1622.96 552.1L1624.39 600.9L1625.83 647.9L1627.27 600.9L1628.70 555.7L1630.13 600.9L1631.57 644.4L1633.01 600.9L1634.44 559.0L1635.88 600.9L1637.31 641.2L1638.75 600.9L1640.18 562.2L1641.62 600.9L1643.05 638.1L1644.49 600.9L1645.92 565.2L1647.36 600.9L1648.79 635.2L1650.23 600.9L1651.66 568.0L1653.10 600.9L1654.53 632.5L1655.97 600.9L1657.40 570.6L1658.84 600.9L1660.27 630.0L1661.70 600.9L1663.14 573.0L1664.58 600.9L1666.01 627.6L1667.45 600.9L1668.88 575.3L1670.32 600.9L1671.75 625.4L1673.18 600.9L1674.62 577.5L1676.06 600.9L1677.49 623.3L1678.93 600.9L1680.36 579.5L1681.80 600.9L1683.23 621.4L1684.66 600.9L1686.10 581.3L1687.54 600.9L1688.97 619.6L1690.41 600.9L1691.84 583.1L1693.28 600.9L1694.71 617.9L1696.14 600.9L1697.58 584.7L1699.02 600.9L1700.45 616.4L1701.88 600.9L1703.32 586.1L1704.76 600.9L1706.19 615.0L1707.62 600.9L1709.06 587.5L1710.50 600.9L1711.93 613.7L1713.37 600.9L1714.80 588.8L1716.24 600.9L1717.67 612.5L1719.11 600.9L1720.54 589.9L1721.98 600.9L1723.41 611.4L1724.85 600.9L1726.28 591.0L1727.72 600.9L1729.15 610.3L1730.59 600.9L1732.02 591.9L1733.45 600.9L1734.89 609.4L1736.33 600.9L1737.76 592.8L1739.20 600.9L1740.63 608.6L1742.07 600.9L1743.50 593.6L1744.93 600.9L1746.37 607.8L1747.81 600.9L1749.24 594.4L1750.68 600.9L1752.11 607.1L1753.55 600.9L1754.98 595.1L1756.41 600.9L1757.85 606.4L1759.29 600.9L1760.72 595.7L1762.16 600.9L1763.59 605.9L1765.03 600.9L1766.46 596.2L1767.89 600.9L1769.33 605.3L1770.77 600.9L1772.20 596.7L1773.63 600.9L1775.07 604.8L1776.51 600.9L1777.94 597.2L1779.38 600.9L1780.81 604.4L1782.25 600.9L1783.68 597.6L1785.12 600.9L1786.55 604.0L1787.99 600.9L1789.42 598.0L1790.86 600.9L1792.29 603.7L1793.73 600.9L1795.16 598.3L1796.60 600.9L1798.03 603.4L1799.47 600.9L1800.90 598.6L1802.34 600.9L1803.77 603.1L1805.20 600.9L1806.64 598.9L1808.08 600.9L1809.51 602.8L1810.95 600.9L1812.38 599.1L1813.82 600.9L1815.25 602.6L1816.68 600.9L1818.12 599.3L1819.56 600.9L1820.99 602.4L1822.43 600.9L1823.86 599.5L1825.30 600.9L1826.73 602.2L1828.16 600.9L1829.60 599.7L1831.04 600.9L1832.47 602.1L1833.91 600.9L1835.34 599.8L1836.78 600.9L1838.21 601.9L1839.64 600.9L1841.08 600.0L1842.52 600.9L1843.95 601.8L1845.38 600.9L1846.82 600.1L1848.26 600.9L1849.69 601.7L1851.12 600.9L1852.56 600.2L1854.00 600.9L1855.43 601.6L1856.87 600.9L1858.30 600.3L1859.74 600.9L1861.17 601.5L1862.61 600.9L1864.04 600.3L1865.47 600.9L1866.91 601.4L1868.35 600.9L1869.78 600.4L1871.22 600.9L1872.65 601.3L1874.09 600.9L1875.52 600.5L1876.95 600.9L1878.39 601.3L1879.83 600.9L1881.26 600.5L1882.70 600.9L1884.13 601.2L1885.57 600.9L1887.00 600.6L1888.43 600.9L1889.87 601.2L1891.31 600.9L1892.50 600.6" fill="none" stroke="#1238e6" stroke-width="1" stroke-linejoin="round"/><path d="M776.5 283.5H1906.5V918.5H776.5Z" fill="none" stroke="#000" stroke-width="1"/><path d="M790.5 918.5v-7.5M790.5 283.5v7M776.5 297.5h7.5M1906.5 297.5h-7.5M900.5 918.5v-7.5M900.5 283.5v7M776.5 358.5h7.5M1906.5 358.5h-7.5M1010.5 918.5v-7.5M1010.5 283.5v7M776.5 419.5h7.5M1906.5 419.5h-7.5M1121.5 918.5v-7.5M1121.5 283.5v7M776.5 479.5h7.5M1906.5 479.5h-7.5M1231.5 918.5v-7.5M1231.5 283.5v7M776.5 540.5h7.5M1906.5 540.5h-7.5M1341.5 918.5v-7.5M1341.5 283.5v7M776.5 601.5h7.5M1906.5 601.5h-7.5M1451.5 918.5v-7.5M1451.5 283.5v7M776.5 662.5h7.5M1906.5 662.5h-7.5M1561.5 918.5v-7.5M1561.5 283.5v7M776.5 723.5h7.5M1906.5 723.5h-7.5M1672.5 918.5v-7.5M1672.5 283.5v7M776.5 783.5h7.5M1906.5 783.5h-7.5M1782.5 918.5v-7.5M1782.5 283.5v7M776.5 844.5h7.5M1906.5 844.5h-7.5M1892.5 918.5v-7.5M1892.5 283.5v7M776.5 905.5h7.5M1906.5 905.5h-7.5" stroke="#000" stroke-width="1" fill="none"/></svg>
<span class="t" style="top:290.00px;font-size:14.8px;color:#111;font-family:'DejaVu Sans','Liberation Sans',sans-serif;left:772.40px;transform:translateX(-100%);letter-spacing:0.55px;">0.01</span>
<span class="t" style="top:351.00px;font-size:14.8px;color:#111;font-family:'DejaVu Sans','Liberation Sans',sans-serif;left:772.40px;transform:translateX(-100%);letter-spacing:0.55px;">0.008</span>
<span class="t" style="top:412.00px;font-size:14.8px;color:#111;font-family:'DejaVu Sans','Liberation Sans',sans-serif;left:772.40px;transform:translateX(-100%);letter-spacing:0.55px;">0.006</span>
<span class="t" style="top:472.00px;font-size:14.8px;color:#111;font-family:'DejaVu Sans','Liberation Sans',sans-serif;left:772.40px;transform:translateX(-100%);letter-spacing:0.55px;">0.004</span>
<span class="t" style="top:533.00px;font-size:14.8px;color:#111;font-family:'DejaVu Sans','Liberation Sans',sans-serif;left:772.40px;transform:translateX(-100%);letter-spacing:0.55px;">0.002</span>
<span class="t" style="top:594.00px;font-size:14.8px;color:#111;font-family:'DejaVu Sans','Liberation Sans',sans-serif;left:772.40px;transform:translateX(-100%);letter-spacing:0.55px;">0</span>
<span class="t" style="top:655.00px;font-size:14.8px;color:#111;font-family:'DejaVu Sans','Liberation Sans',sans-serif;left:772.40px;transform:translateX(-100%);letter-spacing:0.55px;">-0.002</span>
<span class="t" style="top:716.00px;font-size:14.8px;color:#111;font-family:'DejaVu Sans','Liberation Sans',sans-serif;left:772.40px;transform:translateX(-100%);letter-spacing:0.55px;">-0.004</span>
<span class="t" style="top:776.00px;font-size:14.8px;color:#111;font-family:'DejaVu Sans','Liberation Sans',sans-serif;left:772.40px;transform:translateX(-100%);letter-spacing:0.55px;">-0.006</span>
<span class="t" style="top:837.00px;font-size:14.8px;color:#111;font-family:'DejaVu Sans','Liberation Sans',sans-serif;left:772.40px;transform:translateX(-100%);letter-spacing:0.55px;">-0.008</span>
<span class="t" style="top:898.00px;font-size:14.8px;color:#111;font-family:'DejaVu Sans','Liberation Sans',sans-serif;left:772.40px;transform:translateX(-100%);letter-spacing:0.55px;">-0.01</span>
<span class="t" style="top:926.00px;font-size:14.8px;color:#111;font-family:'DejaVu Sans','Liberation Sans',sans-serif;left:791.50px;transform:translateX(-50%);letter-spacing:0.55px;">2.75</span>
<span class="t" style="top:926.00px;font-size:14.8px;color:#111;font-family:'DejaVu Sans','Liberation Sans',sans-serif;left:901.70px;transform:translateX(-50%);letter-spacing:0.55px;">2.8</span>
<span class="t" style="top:926.00px;font-size:14.8px;color:#111;font-family:'DejaVu Sans','Liberation Sans',sans-serif;left:1011.90px;transform:translateX(-50%);letter-spacing:0.55px;">2.85</span>
<span class="t" style="top:926.00px;font-size:14.8px;color:#111;font-family:'DejaVu Sans','Liberation Sans',sans-serif;left:1122.10px;transform:translateX(-50%);letter-spacing:0.55px;">2.9</span>
<span class="t" style="top:926.00px;font-size:14.8px;color:#111;font-family:'DejaVu Sans','Liberation Sans',sans-serif;left:1232.30px;transform:translateX(-50%);letter-spacing:0.55px;">2.95</span>
<span class="t" style="top:926.00px;font-size:14.8px;color:#111;font-family:'DejaVu Sans','Liberation Sans',sans-serif;left:1342.50px;transform:translateX(-50%);letter-spacing:0.55px;">3</span>
<span class="t" style="top:926.00px;font-size:14.8px;color:#111;font-family:'DejaVu Sans','Liberation Sans',sans-serif;left:1452.70px;transform:translateX(-50%);letter-spacing:0.55px;">3.05</span>
<span class="t" style="top:926.00px;font-size:14.8px;color:#111;font-family:'DejaVu Sans','Liberation Sans',sans-serif;left:1562.90px;transform:translateX(-50%);letter-spacing:0.55px;">3.1</span>
<span class="t" style="top:926.00px;font-size:14.8px;color:#111;font-family:'DejaVu Sans','Liberation Sans',sans-serif;left:1673.10px;transform:translateX(-50%);letter-spacing:0.55px;">3.15</span>
<span class="t" style="top:926.00px;font-size:14.8px;color:#111;font-family:'DejaVu Sans','Liberation Sans',sans-serif;left:1783.30px;transform:translateX(-50%);letter-spacing:0.55px;">3.2</span>
<span class="t" style="top:926.00px;font-size:14.8px;color:#111;font-family:'DejaVu Sans','Liberation Sans',sans-serif;left:1859.00px;letter-spacing:0.5px;">×10</span>
<span class="t" style="top:924.00px;font-size:9.5px;color:#111;font-family:'DejaVu Sans','Liberation Sans',sans-serif;left:1891.20px;letter-spacing:0.6px;">-12</span>
<span class="t" style="top:943.00px;font-size:14.8px;color:#111;font-family:'DejaVu Sans','Liberation Sans',sans-serif;left:1342.30px;transform:translateX(-50%);letter-spacing:0.5px;">t (s)</span>
<span class="t" style="top:245.00px;font-size:14.8px;color:#111;font-family:'DejaVu Sans','Liberation Sans',sans-serif;left:1272.30px;transform:translateX(-50%);letter-spacing:0.5px;">an1(t) (W)</span>
<span class="t" style="left:699px;top:600px;font-size:14.8px;letter-spacing:0.5px;color:#111;font-family:'DejaVu Sans','Liberation Sans',sans-serif;transform:translate(-50%,-50%) rotate(-90deg);">an1(t) (W)</span>
<svg class="a" style="left:1878px;top:230px" width="34" height="30" viewBox="1878 230 34 30"><defs><linearGradient id="cg1" x1="0" y1="0" x2="1" y2="0"><stop offset="0" stop-color="#f4e84a"/><stop offset="0.45" stop-color="#e8e860"/><stop offset="0.6" stop-color="#38b0ee"/><stop offset="1" stop-color="#1430a0"/></linearGradient><linearGradient id="cg2" x1="0" y1="0" x2="0" y2="1"><stop offset="0" stop-color="#3a5ad0"/><stop offset="0.25" stop-color="#1a2c9c" stop-opacity="0"/><stop offset="0.8" stop-color="#1a2c9c" stop-opacity="0"/><stop offset="1" stop-color="#14207c"/></linearGradient></defs><path d="M1880.4 238.5L1903 232.2L1908.6 247.6L1899 256.8L1884 253Z" fill="#f1f1f3"/><rect x="1885.6" y="236.4" width="18.8" height="14.6" rx="3.4" fill="#fdfbf0"/><rect x="1886.2" y="237" width="17.6" height="13.4" rx="3" fill="#1c34a8"/><rect x="1889.6" y="238.6" width="13.6" height="10.4" rx="1.5" fill="url(#cg1)"/><path d="M1893 238.6H1903.2V242.4Z" fill="#2a48c0" fill-opacity="0.85"/><path d="M1896 249H1903.2V246.4Z" fill="#2060d0" fill-opacity="0.8"/><rect x="1886.2" y="237" width="17.6" height="13.4" rx="3" fill="url(#cg2)"/><rect x="1886.4" y="238" width="2.6" height="11.4" rx="1.2" fill="#3c5cd4"/></svg>
</body></html>
